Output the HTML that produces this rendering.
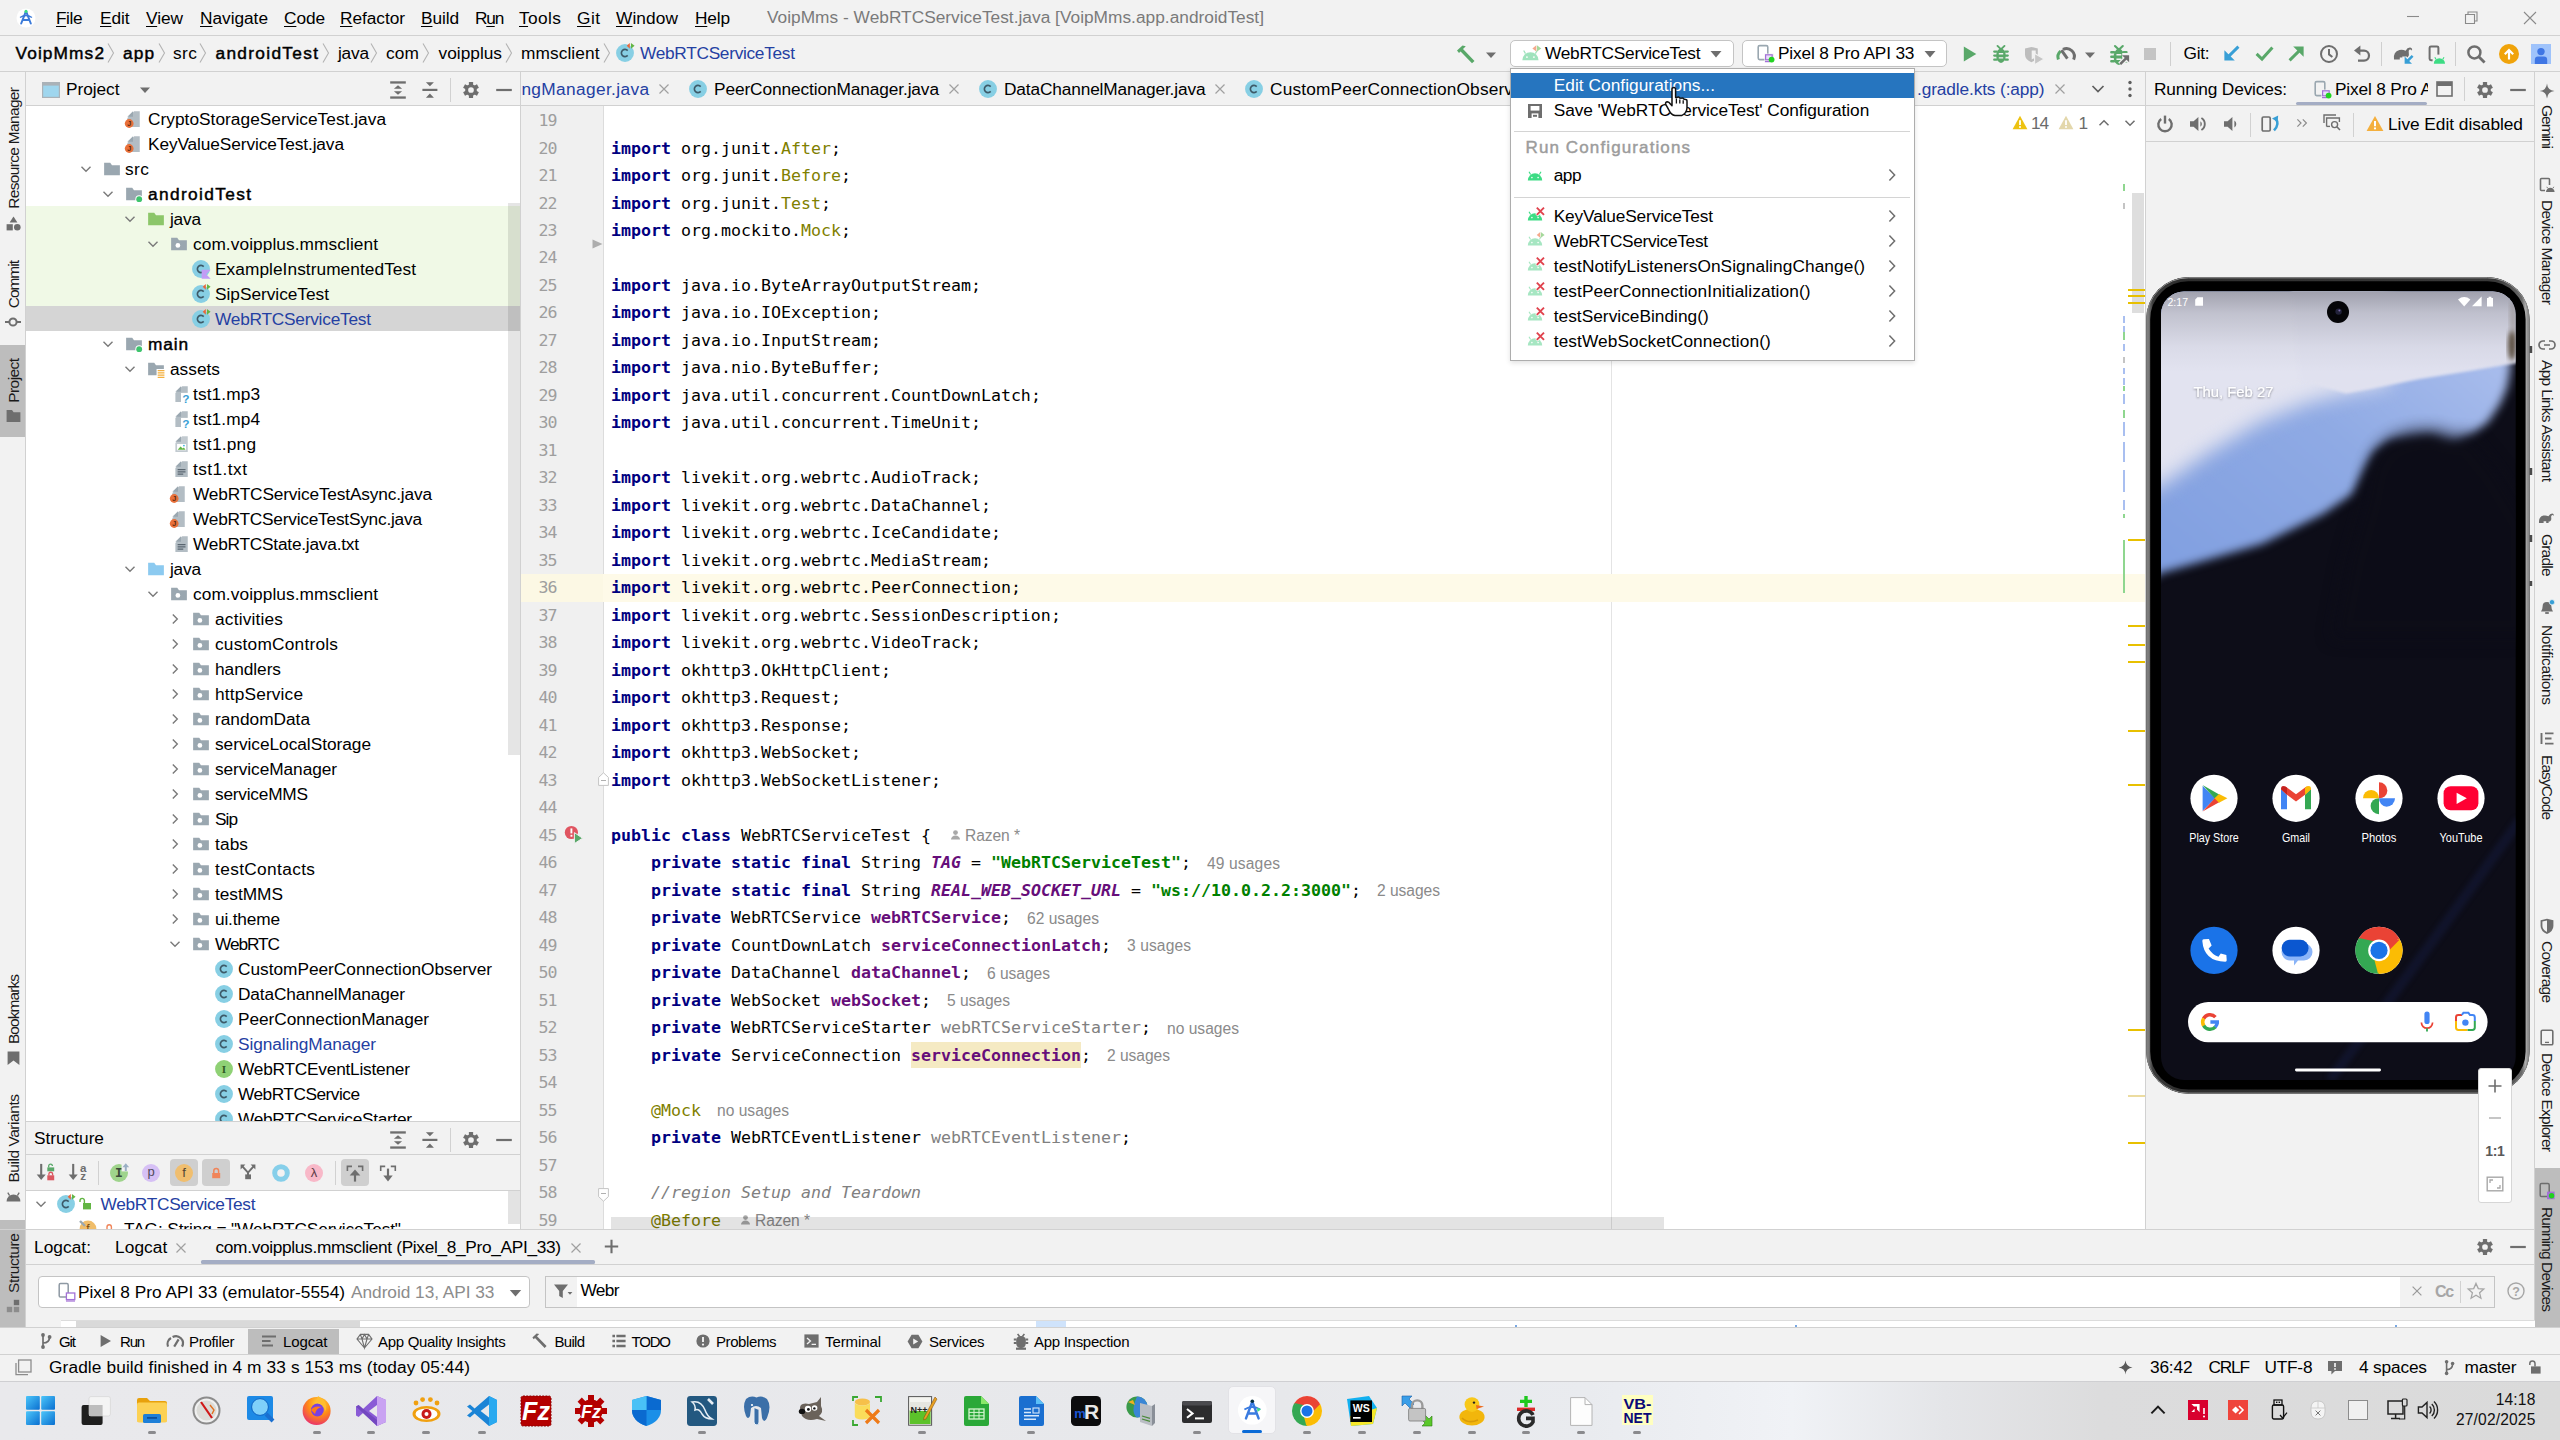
<!DOCTYPE html>
<html lang="en"><head><meta charset="utf-8"><title>VoipMms - WebRTCServiceTest.java</title>
<style>
html,body{margin:0;padding:0;}
body{width:2560px;height:1440px;overflow:hidden;background:#f2f2f2;position:relative;font-family:"Liberation Sans",sans-serif;}
div,span,svg{position:absolute;box-sizing:border-box;}
svg{overflow:visible;}
span{white-space:pre;}
.s{font-family:"Liberation Sans",sans-serif;}
.m{font-family:"DejaVu Sans Mono","Liberation Mono",monospace;}
u{text-decoration-thickness:1px;text-underline-offset:2px;}
</style></head><body>
<div style="left:0px;top:0px;width:2560px;height:1381px;background:#f2f2f2;"></div>
<div style="left:0px;top:35px;width:2560px;height:1px;background:#d1d1d1;"></div>
<div style="left:0px;top:71px;width:2560px;height:1px;background:#d1d1d1;"></div>
<svg style="left:16px;top:8px;" width="20" height="20" viewBox="0 0 20 20"><circle cx="10" cy="10" r="9.5" fill="#fff"/><path d="M10 3.2 L14.8 15.5 M10 3.2 L5.2 15.5 M6.6 12 H13.4" stroke="#3c7bd9" stroke-width="2" fill="none" stroke-linecap="round"/><path d="M4 9.5 Q10 5.5 16 9.5" stroke="#3c7bd9" stroke-width="1.3" fill="none"/><circle cx="10" cy="3.4" r="1.6" fill="#3ddc84"/></svg>
<span class="s" style="left:56.00px;top:10.35px;font-size:17.3px;line-height:17.3px;color:#000;letter-spacing:-0.453px;"><u>F</u>ile</span>
<span class="s" style="left:100.00px;top:10.35px;font-size:17.3px;line-height:17.3px;color:#000;letter-spacing:-0.094px;"><u>E</u>dit</span>
<span class="s" style="left:146.00px;top:10.35px;font-size:17.3px;line-height:17.3px;color:#000;letter-spacing:-0.052px;"><u>V</u>iew</span>
<span class="s" style="left:200.00px;top:10.35px;font-size:17.3px;line-height:17.3px;color:#000;letter-spacing:-0.031px;"><u>N</u>avigate</span>
<span class="s" style="left:284.00px;top:10.35px;font-size:17.3px;line-height:17.3px;color:#000;letter-spacing:-0.109px;"><u>C</u>ode</span>
<span class="s" style="left:340.00px;top:10.35px;font-size:17.3px;line-height:17.3px;color:#000;letter-spacing:-0.045px;"><u>R</u>efactor</span>
<span class="s" style="left:421.00px;top:10.35px;font-size:17.3px;line-height:17.3px;color:#000;letter-spacing:-0.109px;"><u>B</u>uild</span>
<span class="s" style="left:475.00px;top:10.35px;font-size:17.3px;line-height:17.3px;color:#000;letter-spacing:-1.200px;">R<u>u</u>n</span>
<span class="s" style="left:519.00px;top:10.35px;font-size:17.3px;line-height:17.3px;color:#000;letter-spacing:0.414px;"><u>T</u>ools</span>
<span class="s" style="left:577.00px;top:10.35px;font-size:17.3px;line-height:17.3px;color:#000;letter-spacing:0.453px;"><u>G</u>it</span>
<span class="s" style="left:616.00px;top:10.35px;font-size:17.3px;line-height:17.3px;color:#000;letter-spacing:0.106px;"><u>W</u>indow</span>
<span class="s" style="left:695.00px;top:10.35px;font-size:17.3px;line-height:17.3px;color:#000;letter-spacing:-0.182px;"><u>H</u>elp</span>
<span class="s" style="left:767.00px;top:8.95px;font-size:17.3px;line-height:17.3px;color:#7a7a7a;letter-spacing:0.019px;">VoipMms - WebRTCServiceTest.java [VoipMms.app.androidTest]</span>
<svg style="left:2400px;top:4px;" width="150" height="28" viewBox="0 0 150 28"><path d="M7 12.5h12" stroke="#8a8a8a" stroke-width="1.1"/><path d="M65.5 10.5h9v9h-9z M68 10.5v-2.5h9v9h-2.5" stroke="#8a8a8a" stroke-width="1.1" fill="none"/><path d="M124 8 L136 20 M136 8 L124 20" stroke="#8a8a8a" stroke-width="1.1"/></svg>
<span class="s" style="left:15.50px;top:45.35px;font-size:17.3px;line-height:17.3px;color:#000;letter-spacing:1.116px;-webkit-text-stroke:.45px #000;">VoipMms2</span>
<span class="s" style="left:123.00px;top:45.35px;font-size:17.3px;line-height:17.3px;color:#000;letter-spacing:1.078px;-webkit-text-stroke:.45px #000;">app</span>
<span class="s" style="left:173.00px;top:45.35px;font-size:17.3px;line-height:17.3px;color:#000;letter-spacing:0.477px;">src</span>
<span class="s" style="left:215.50px;top:45.35px;font-size:17.3px;line-height:17.3px;color:#000;letter-spacing:1.316px;-webkit-text-stroke:.45px #000;">androidTest</span>
<span class="s" style="left:338.00px;top:45.35px;font-size:17.3px;line-height:17.3px;color:#000;letter-spacing:-0.234px;">java</span>
<span class="s" style="left:386.00px;top:45.35px;font-size:17.3px;line-height:17.3px;color:#000;letter-spacing:0.172px;">com</span>
<span class="s" style="left:438.50px;top:45.35px;font-size:17.3px;line-height:17.3px;color:#000;letter-spacing:0.013px;">voipplus</span>
<span class="s" style="left:521.00px;top:45.35px;font-size:17.3px;line-height:17.3px;color:#000;letter-spacing:0.090px;">mmsclient</span>
<svg style="left:106.5px;top:43px;" width="8" height="20" viewBox="0 0 8 20"><path d="M1 0.5 L6.5 10 L1 19.5" fill="none" stroke="#b3b3b3" stroke-width="1.1"/></svg>
<svg style="left:158px;top:43px;" width="8" height="20" viewBox="0 0 8 20"><path d="M1 0.5 L6.5 10 L1 19.5" fill="none" stroke="#b3b3b3" stroke-width="1.1"/></svg>
<svg style="left:199px;top:43px;" width="8" height="20" viewBox="0 0 8 20"><path d="M1 0.5 L6.5 10 L1 19.5" fill="none" stroke="#b3b3b3" stroke-width="1.1"/></svg>
<svg style="left:321.5px;top:43px;" width="8" height="20" viewBox="0 0 8 20"><path d="M1 0.5 L6.5 10 L1 19.5" fill="none" stroke="#b3b3b3" stroke-width="1.1"/></svg>
<svg style="left:370px;top:43px;" width="8" height="20" viewBox="0 0 8 20"><path d="M1 0.5 L6.5 10 L1 19.5" fill="none" stroke="#b3b3b3" stroke-width="1.1"/></svg>
<svg style="left:421.5px;top:43px;" width="8" height="20" viewBox="0 0 8 20"><path d="M1 0.5 L6.5 10 L1 19.5" fill="none" stroke="#b3b3b3" stroke-width="1.1"/></svg>
<svg style="left:505px;top:43px;" width="8" height="20" viewBox="0 0 8 20"><path d="M1 0.5 L6.5 10 L1 19.5" fill="none" stroke="#b3b3b3" stroke-width="1.1"/></svg>
<svg style="left:603px;top:43px;" width="8" height="20" viewBox="0 0 8 20"><path d="M1 0.5 L6.5 10 L1 19.5" fill="none" stroke="#b3b3b3" stroke-width="1.1"/></svg>
<svg style="left:616px;top:44px;" width="18" height="18" viewBox="0 0 16 16"><circle cx="8" cy="8" r="7.95" fill="#87cfe4"/><path d="M10.4 5.9 A3.2 3.2 0 1 0 10.4 10.1" fill="none" stroke="#3d5a68" stroke-width="1.45"/><path d="M12.3 -.9 V4.2 L9.5 1.65 Z" fill="#e8663a"/><path d="M13.3 -.9 L16.5 1.65 L13.3 4.2 Z" fill="#62b543"/></svg>
<span class="s" style="left:640.00px;top:45.35px;font-size:17.3px;line-height:17.3px;color:#2440a2;letter-spacing:-0.297px;">WebRTCServiceTest</span>
<div style="left:25px;top:72px;width:1px;height:1255px;background:#d1d1d1;"></div>
<div style="left:0px;top:344.5px;width:25px;height:92px;background:#bdbdbd;"></div>
<div style="left:0px;top:1219.5px;width:25px;height:107.5px;background:#bdbdbd;"></div>
<svg style="left:1.5px;top:85.30000000000001px;" width="24" height="125.7" viewBox="0 0 24 125.7"><text transform="translate(17.4,62.85) rotate(-90)" text-anchor="middle" textLength="121.7" lengthAdjust="spacing" font-family="Liberation Sans, sans-serif" font-size="15.5" font-weight="400" fill="#1a1a1a">Resource Manager</text></svg>
<svg style="left:1.5px;top:257.70000000000005px;" width="24" height="52.30000000000001" viewBox="0 0 24 52.30000000000001"><text transform="translate(17.4,26.150000000000006) rotate(-90)" text-anchor="middle" textLength="48.30000000000001" lengthAdjust="spacing" font-family="Liberation Sans, sans-serif" font-size="15.5" font-weight="400" fill="#1a1a1a">Commit</text></svg>
<svg style="left:1.5px;top:356.29999999999995px;" width="24" height="48.69999999999999" viewBox="0 0 24 48.69999999999999"><text transform="translate(17.4,24.349999999999994) rotate(-90)" text-anchor="middle" textLength="44.69999999999999" lengthAdjust="spacing" font-family="Liberation Sans, sans-serif" font-size="15.5" font-weight="400" fill="#1a1a1a">Project</text></svg>
<svg style="left:1.5px;top:972.3px;" width="24" height="74.10000000000014" viewBox="0 0 24 74.10000000000014"><text transform="translate(17.4,37.05000000000007) rotate(-90)" text-anchor="middle" textLength="70.10000000000014" lengthAdjust="spacing" font-family="Liberation Sans, sans-serif" font-size="15.5" font-weight="400" fill="#1a1a1a">Bookmarks</text></svg>
<svg style="left:1.5px;top:1092.0px;" width="24" height="92.59999999999991" viewBox="0 0 24 92.59999999999991"><text transform="translate(17.4,46.299999999999955) rotate(-90)" text-anchor="middle" textLength="88.59999999999991" lengthAdjust="spacing" font-family="Liberation Sans, sans-serif" font-size="15.5" font-weight="400" fill="#1a1a1a">Build Variants</text></svg>
<svg style="left:1.5px;top:1230.8px;" width="24" height="64.0" viewBox="0 0 24 64.0"><text transform="translate(17.4,32.0) rotate(-90)" text-anchor="middle" textLength="60.0" lengthAdjust="spacing" font-family="Liberation Sans, sans-serif" font-size="15.5" font-weight="400" fill="#1a1a1a">Structure</text></svg>
<svg style="left:5.5px;top:215.5px;" width="15" height="15" viewBox="0 0 15 15"><path d="M7.5 .6 L11.4 6.6 H3.6 Z" fill="#6e6e6e"/><rect x=".6" y="8.2" width="6.2" height="6.2" fill="#6e6e6e"/><circle cx="11.3" cy="11.3" r="3.3" fill="#6e6e6e"/></svg>
<svg style="left:5px;top:314px;" width="16" height="16" viewBox="0 0 16 16"><circle cx="8" cy="8" r="3.6" fill="none" stroke="#6e6e6e" stroke-width="2"/><path d="M0 8h4.4M11.6 8h4.4" stroke="#6e6e6e" stroke-width="2"/></svg>
<svg style="left:5.5px;top:409px;" width="15" height="14" viewBox="0 0 15 14"><path d="M.6 1 H6 L7.6 3.2 H14.4 V13 H.6 Z" fill="#6e6e6e"/></svg>
<svg style="left:6.5px;top:1051px;" width="13" height="14.5" viewBox="0 0 13 14.5"><path d="M.6 .4 H12.4 V14 L6.5 9.6 L.6 14 Z" fill="#6e6e6e"/></svg>
<svg style="left:5.5px;top:1189px;" width="15" height="13" viewBox="0 0 15 13"><path d="M.6 12.4 A6.9 6.9 0 0 1 14.4 12.4 Z" fill="#6e6e6e"/><path d="M3.6 6.6 L1.8 3.6 M11.4 6.6 L13.2 3.6" stroke="#6e6e6e" stroke-width="1.3"/></svg>
<svg style="left:6px;top:1299px;" width="14" height="14" viewBox="0 0 14 14"><rect x="7.8" y=".8" width="5.4" height="5.4" fill="#6e6e6e"/><rect x=".8" y="7.8" width="5.4" height="5.4" fill="#8c8c8c"/><rect x="7.8" y="7.8" width="5.4" height="5.4" fill="#8c8c8c"/></svg>
<div style="left:26px;top:106px;width:494px;height:1016px;background:#fff;"></div>
<div style="left:26px;top:105px;width:494px;height:1px;background:#d1d1d1;"></div>
<div style="left:520px;top:72px;width:1px;height:1158px;background:#d1d1d1;"></div>
<svg style="left:42px;top:82px;" width="18" height="16" viewBox="0 0 18 16"><rect x=".6" y=".6" width="16.8" height="14.8" fill="#9fd6ee" stroke="#aab2b8" stroke-width="1.2"/><rect x=".6" y=".6" width="16.8" height="3" fill="#aab2b8"/></svg>
<span class="s" style="left:66.00px;top:81.35px;font-size:17.3px;line-height:17.3px;color:#000;letter-spacing:-0.049px;">Project</span>
<svg style="left:139px;top:86px;" width="12" height="8" viewBox="0 0 12 8"><path d="M1 1.5 H11 L6 7 Z" fill="#6e6e6e"/></svg>
<svg style="left:390px;top:82px;overflow:visible;" width="16" height="16" viewBox="0 0 16 16"><rect x=".2" y="-.7" width="15.6" height="2.3" fill="#6e6e6e"/><rect x=".2" y="14.4" width="15.6" height="2.3" fill="#6e6e6e"/><path d="M8 3.2 L12.1 6.8 H3.9 Z M8 12.8 L12.1 9.2 H3.9 Z" fill="#6e6e6e"/></svg>
<svg style="left:422px;top:82px;overflow:visible;" width="16" height="16" viewBox="0 0 16 16"><rect x=".4" y="6.8" width="15" height="2.2" fill="#6e6e6e"/><path d="M3.9 .2 H11.9 L7.9 4.3 Z M3.9 15.8 H11.9 L7.9 11.4 Z" fill="#6e6e6e"/></svg>
<div style="left:450px;top:78px;width:1px;height:24px;background:#d1d1d1;"></div>
<svg style="left:463px;top:82px;" width="16" height="16" viewBox="0 0 16 16"><rect x="5.9" y="0" width="4.2" height="3.6" rx=".5" fill="#6e6e6e" transform="rotate(0 8 8)"/><rect x="5.9" y="0" width="4.2" height="3.6" rx=".5" fill="#6e6e6e" transform="rotate(60 8 8)"/><rect x="5.9" y="0" width="4.2" height="3.6" rx=".5" fill="#6e6e6e" transform="rotate(120 8 8)"/><rect x="5.9" y="0" width="4.2" height="3.6" rx=".5" fill="#6e6e6e" transform="rotate(180 8 8)"/><rect x="5.9" y="0" width="4.2" height="3.6" rx=".5" fill="#6e6e6e" transform="rotate(240 8 8)"/><rect x="5.9" y="0" width="4.2" height="3.6" rx=".5" fill="#6e6e6e" transform="rotate(300 8 8)"/><circle cx="8" cy="8" r="4.35" fill="none" stroke="#6e6e6e" stroke-width="3"/></svg>
<svg style="left:496px;top:82px;" width="16" height="16" viewBox="0 0 16 16"><rect x=".2" y="6.9" width="15.6" height="2.2" fill="#6e6e6e"/></svg>
<div style="left:26px;top:206px;width:494px;height:100px;background:#f0f9e6;"></div>
<div style="left:26px;top:306px;width:494px;height:25px;background:#d5d5d5;"></div>
<div style="left:26px;top:106px;width:494px;height:1016px;overflow:hidden">
<svg style="left:98px;top:3.5px;" width="18" height="18" viewBox="0 0 16 16"><path d="M9 1 H14 V15 H3 V7 Z" fill="#9aa7b0" opacity=".75"/><path d="M8 1 V6 H3 Z" fill="#9aa7b0"/><circle cx="4.6" cy="12" r="3.9" fill="#e8703a"/><text x="4.6" y="14.3" text-anchor="middle" font-family="Liberation Sans, sans-serif" font-size="6.5" font-weight="700" fill="#5a2a10">J</text></svg>
<span class="s" style="left:122.00px;top:4.85px;font-size:17.3px;line-height:17.3px;color:#000;letter-spacing:0.027px;">CryptoStorageServiceTest.java</span>
<svg style="left:98px;top:28.5px;" width="18" height="18" viewBox="0 0 16 16"><path d="M9 1 H14 V15 H3 V7 Z" fill="#9aa7b0" opacity=".75"/><path d="M8 1 V6 H3 Z" fill="#9aa7b0"/><circle cx="4.6" cy="12" r="3.9" fill="#e8703a"/><text x="4.6" y="14.3" text-anchor="middle" font-family="Liberation Sans, sans-serif" font-size="6.5" font-weight="700" fill="#5a2a10">J</text></svg>
<span class="s" style="left:122.00px;top:29.85px;font-size:17.3px;line-height:17.3px;color:#000;letter-spacing:-0.109px;">KeyValueServiceTest.java</span>
<svg style="left:77px;top:53.5px;" width="18" height="18" viewBox="0 0 16 16"><path d="M1 2.5 H6.4 L8 4.6 H15 V13.5 H1 Z" fill="#9aa7b0"/></svg>
<span class="s" style="left:99.00px;top:54.85px;font-size:17.3px;line-height:17.3px;color:#000;letter-spacing:0.477px;">src</span>
<svg style="left:52px;top:54.5px;" width="16" height="16" viewBox="0 0 16 16"><path d="M3.5 5.8 L8 10.3 L12.5 5.8" fill="none" stroke="#7a7a7a" stroke-width="1.4"/></svg>
<svg style="left:99px;top:78.5px;" width="18" height="18" viewBox="0 0 16 16"><path d="M1 2.5 H6.4 L8 4.6 H15 V13.5 H1 Z" fill="#9aa7b0"/><circle cx="12.6" cy="12.6" r="3.4" fill="#fff"/><circle cx="12.6" cy="12.6" r="2.6" fill="#3ec46d"/></svg>
<span class="s" style="left:122.00px;top:79.85px;font-size:17.3px;line-height:17.3px;color:#000;letter-spacing:1.366px;-webkit-text-stroke:.45px #000;">androidTest</span>
<svg style="left:74px;top:79.5px;" width="16" height="16" viewBox="0 0 16 16"><path d="M3.5 5.8 L8 10.3 L12.5 5.8" fill="none" stroke="#7a7a7a" stroke-width="1.4"/></svg>
<svg style="left:121px;top:103.5px;" width="18" height="18" viewBox="0 0 16 16"><path d="M1 2.5 H6.4 L8 4.6 H15 V13.5 H1 Z" fill="#8cc66a"/></svg>
<span class="s" style="left:144.00px;top:104.85px;font-size:17.3px;line-height:17.3px;color:#000;letter-spacing:-0.234px;">java</span>
<svg style="left:96px;top:104.5px;" width="16" height="16" viewBox="0 0 16 16"><path d="M3.5 5.8 L8 10.3 L12.5 5.8" fill="none" stroke="#7a7a7a" stroke-width="1.4"/></svg>
<svg style="left:144px;top:128.5px;" width="18" height="18" viewBox="0 0 16 16"><path d="M1 2.5 H6.4 L8 4.6 H15 V13.5 H1 Z" fill="#9aa7b0"/><circle cx="7" cy="9.3" r="2.1" fill="#fff"/></svg>
<span class="s" style="left:167.00px;top:129.85px;font-size:17.3px;line-height:17.3px;color:#000;letter-spacing:0.074px;">com.voipplus.mmsclient</span>
<svg style="left:119px;top:129.5px;" width="16" height="16" viewBox="0 0 16 16"><path d="M3.5 5.8 L8 10.3 L12.5 5.8" fill="none" stroke="#7a7a7a" stroke-width="1.4"/></svg>
<svg style="left:166px;top:153.5px;" width="18" height="18" viewBox="0 0 16 16"><circle cx="8" cy="8" r="7.95" fill="#87cfe4"/><path d="M10.4 5.9 A3.2 3.2 0 1 0 10.4 10.1" fill="none" stroke="#3d5a68" stroke-width="1.45"/><path d="M8.6 8.7 H16.6 L12.6 12.7 L16.6 16.7 H8.6 Z" fill="#c29cf5"/></svg>
<span class="s" style="left:189.00px;top:154.85px;font-size:17.3px;line-height:17.3px;color:#000;letter-spacing:0.055px;">ExampleInstrumentedTest</span>
<svg style="left:166px;top:178.5px;" width="18" height="18" viewBox="0 0 16 16"><circle cx="8" cy="8" r="7.95" fill="#87cfe4"/><path d="M10.4 5.9 A3.2 3.2 0 1 0 10.4 10.1" fill="none" stroke="#3d5a68" stroke-width="1.45"/><path d="M12.3 -.9 V4.2 L9.5 1.65 Z" fill="#e8663a"/><path d="M13.3 -.9 L16.5 1.65 L13.3 4.2 Z" fill="#62b543"/></svg>
<span class="s" style="left:189.00px;top:179.85px;font-size:17.3px;line-height:17.3px;color:#000;letter-spacing:-0.023px;">SipServiceTest</span>
<svg style="left:166px;top:203.5px;" width="18" height="18" viewBox="0 0 16 16"><circle cx="8" cy="8" r="7.95" fill="#87cfe4"/><path d="M10.4 5.9 A3.2 3.2 0 1 0 10.4 10.1" fill="none" stroke="#3d5a68" stroke-width="1.45"/><path d="M12.3 -.9 V4.2 L9.5 1.65 Z" fill="#e8663a"/><path d="M13.3 -.9 L16.5 1.65 L13.3 4.2 Z" fill="#62b543"/></svg>
<span class="s" style="left:189.00px;top:204.85px;font-size:17.3px;line-height:17.3px;color:#2440a2;letter-spacing:-0.234px;">WebRTCServiceTest</span>
<svg style="left:99px;top:228.5px;" width="18" height="18" viewBox="0 0 16 16"><path d="M1 2.5 H6.4 L8 4.6 H15 V13.5 H1 Z" fill="#9aa7b0"/><circle cx="12.6" cy="12.6" r="3.4" fill="#fff"/><circle cx="12.6" cy="12.6" r="2.6" fill="#3ec46d"/></svg>
<span class="s" style="left:122.00px;top:229.85px;font-size:17.3px;line-height:17.3px;color:#000;letter-spacing:0.844px;-webkit-text-stroke:.45px #000;">main</span>
<svg style="left:74px;top:229.5px;" width="16" height="16" viewBox="0 0 16 16"><path d="M3.5 5.8 L8 10.3 L12.5 5.8" fill="none" stroke="#7a7a7a" stroke-width="1.4"/></svg>
<svg style="left:121px;top:253.5px;" width="18" height="18" viewBox="0 0 16 16"><path d="M1 2.5 H6.4 L8 4.6 H15 V13.5 H1 Z" fill="#9aa7b0"/><rect x="8.5" y="8" width="8" height="8" fill="#fff"/><path d="M9.5 9.5h6M9.5 11.5h6M9.5 13.5h6M9.5 15.5h6" stroke="#f4af3d" stroke-width="1.1"/></svg>
<span class="s" style="left:144.00px;top:254.85px;font-size:17.3px;line-height:17.3px;color:#000;letter-spacing:0.009px;">assets</span>
<svg style="left:96px;top:254.5px;" width="16" height="16" viewBox="0 0 16 16"><path d="M3.5 5.8 L8 10.3 L12.5 5.8" fill="none" stroke="#7a7a7a" stroke-width="1.4"/></svg>
<svg style="left:146px;top:278.5px;" width="18" height="18" viewBox="0 0 16 16"><path d="M9 1 H14 V15 H3 V7 Z" fill="#9aa7b0" opacity=".75"/><path d="M8 1 V6 H3 Z" fill="#9aa7b0"/><rect x="8" y="7" width="8" height="9" fill="#fff"/><text x="12.4" y="15.6" text-anchor="middle" font-family="Liberation Sans, sans-serif" font-size="10.5" font-weight="700" fill="#3b9fd6">?</text></svg>
<span class="s" style="left:167.00px;top:279.85px;font-size:17.3px;line-height:17.3px;color:#000;letter-spacing:0.103px;">tst1.mp3</span>
<svg style="left:146px;top:303.5px;" width="18" height="18" viewBox="0 0 16 16"><path d="M9 1 H14 V15 H3 V7 Z" fill="#9aa7b0" opacity=".75"/><path d="M8 1 V6 H3 Z" fill="#9aa7b0"/><rect x="8" y="7" width="8" height="9" fill="#fff"/><text x="12.4" y="15.6" text-anchor="middle" font-family="Liberation Sans, sans-serif" font-size="10.5" font-weight="700" fill="#3b9fd6">?</text></svg>
<span class="s" style="left:167.00px;top:304.85px;font-size:17.3px;line-height:17.3px;color:#000;letter-spacing:0.103px;">tst1.mp4</span>
<svg style="left:146px;top:328.5px;" width="18" height="18" viewBox="0 0 16 16"><path d="M9 1 H14 V15 H3 V7 Z" fill="#9aa7b0" opacity=".6"/><path d="M8 1 V6 H3 Z" fill="#9aa7b0"/><rect x="4.5" y="8" width="8" height="5.6" fill="#fff"/><path d="M5 13 L7.6 10.2 L9.5 12 L10.6 11 L12 13 Z" fill="#62b543"/><circle cx="10.6" cy="9.4" r=".8" fill="#40b6e0"/></svg>
<span class="s" style="left:167.00px;top:329.85px;font-size:17.3px;line-height:17.3px;color:#000;letter-spacing:0.214px;">tst1.png</span>
<svg style="left:146px;top:353.5px;" width="18" height="18" viewBox="0 0 16 16"><path d="M9 1 H14 V15 H3 V7 Z" fill="#9aa7b0" opacity=".75"/><path d="M8 1 V6 H3 Z" fill="#9aa7b0"/><path d="M5 8.5h7M5 10.5h7M5 12.5h5" stroke="#5a6670" stroke-width="1"/></svg>
<span class="s" style="left:167.00px;top:354.85px;font-size:17.3px;line-height:17.3px;color:#000;letter-spacing:0.442px;">tst1.txt</span>
<svg style="left:143px;top:378.5px;" width="18" height="18" viewBox="0 0 16 16"><path d="M9 1 H14 V15 H3 V7 Z" fill="#9aa7b0" opacity=".75"/><path d="M8 1 V6 H3 Z" fill="#9aa7b0"/><circle cx="4.6" cy="12" r="3.9" fill="#e8703a"/><text x="4.6" y="14.3" text-anchor="middle" font-family="Liberation Sans, sans-serif" font-size="6.5" font-weight="700" fill="#5a2a10">J</text></svg>
<span class="s" style="left:167.00px;top:379.85px;font-size:17.3px;line-height:17.3px;color:#000;letter-spacing:-0.166px;">WebRTCServiceTestAsync.java</span>
<svg style="left:143px;top:403.5px;" width="18" height="18" viewBox="0 0 16 16"><path d="M9 1 H14 V15 H3 V7 Z" fill="#9aa7b0" opacity=".75"/><path d="M8 1 V6 H3 Z" fill="#9aa7b0"/><circle cx="4.6" cy="12" r="3.9" fill="#e8703a"/><text x="4.6" y="14.3" text-anchor="middle" font-family="Liberation Sans, sans-serif" font-size="6.5" font-weight="700" fill="#5a2a10">J</text></svg>
<span class="s" style="left:167.00px;top:404.85px;font-size:17.3px;line-height:17.3px;color:#000;letter-spacing:-0.227px;">WebRTCServiceTestSync.java</span>
<svg style="left:146px;top:428.5px;" width="18" height="18" viewBox="0 0 16 16"><path d="M9 1 H14 V15 H3 V7 Z" fill="#9aa7b0" opacity=".75"/><path d="M8 1 V6 H3 Z" fill="#9aa7b0"/><path d="M5 8.5h7M5 10.5h7M5 12.5h5" stroke="#5a6670" stroke-width="1"/></svg>
<span class="s" style="left:167.00px;top:429.85px;font-size:17.3px;line-height:17.3px;color:#000;letter-spacing:-0.228px;">WebRTCState.java.txt</span>
<svg style="left:121px;top:453.5px;" width="18" height="18" viewBox="0 0 16 16"><path d="M1 2.5 H6.4 L8 4.6 H15 V13.5 H1 Z" fill="#8ccaf0"/></svg>
<span class="s" style="left:144.00px;top:454.85px;font-size:17.3px;line-height:17.3px;color:#000;letter-spacing:-0.234px;">java</span>
<svg style="left:96px;top:454.5px;" width="16" height="16" viewBox="0 0 16 16"><path d="M3.5 5.8 L8 10.3 L12.5 5.8" fill="none" stroke="#7a7a7a" stroke-width="1.4"/></svg>
<svg style="left:144px;top:478.5px;" width="18" height="18" viewBox="0 0 16 16"><path d="M1 2.5 H6.4 L8 4.6 H15 V13.5 H1 Z" fill="#9aa7b0"/><circle cx="7" cy="9.3" r="2.1" fill="#fff"/></svg>
<span class="s" style="left:167.00px;top:479.85px;font-size:17.3px;line-height:17.3px;color:#000;letter-spacing:0.074px;">com.voipplus.mmsclient</span>
<svg style="left:119px;top:479.5px;" width="16" height="16" viewBox="0 0 16 16"><path d="M3.5 5.8 L8 10.3 L12.5 5.8" fill="none" stroke="#7a7a7a" stroke-width="1.4"/></svg>
<svg style="left:166px;top:503.5px;" width="18" height="18" viewBox="0 0 16 16"><path d="M1 2.5 H6.4 L8 4.6 H15 V13.5 H1 Z" fill="#9aa7b0"/><circle cx="7" cy="9.3" r="2.1" fill="#fff"/></svg>
<span class="s" style="left:189.00px;top:504.85px;font-size:17.3px;line-height:17.3px;color:#000;letter-spacing:0.193px;">activities</span>
<svg style="left:141px;top:504.5px;" width="16" height="16" viewBox="0 0 16 16"><path d="M5.8 3.5 L10.3 8 L5.8 12.5" fill="none" stroke="#7a7a7a" stroke-width="1.4"/></svg>
<svg style="left:166px;top:528.5px;" width="18" height="18" viewBox="0 0 16 16"><path d="M1 2.5 H6.4 L8 4.6 H15 V13.5 H1 Z" fill="#9aa7b0"/><circle cx="7" cy="9.3" r="2.1" fill="#fff"/></svg>
<span class="s" style="left:189.00px;top:529.85px;font-size:17.3px;line-height:17.3px;color:#000;letter-spacing:0.226px;">customControls</span>
<svg style="left:141px;top:529.5px;" width="16" height="16" viewBox="0 0 16 16"><path d="M5.8 3.5 L10.3 8 L5.8 12.5" fill="none" stroke="#7a7a7a" stroke-width="1.4"/></svg>
<svg style="left:166px;top:553.5px;" width="18" height="18" viewBox="0 0 16 16"><path d="M1 2.5 H6.4 L8 4.6 H15 V13.5 H1 Z" fill="#9aa7b0"/><circle cx="7" cy="9.3" r="2.1" fill="#fff"/></svg>
<span class="s" style="left:189.00px;top:554.85px;font-size:17.3px;line-height:17.3px;color:#000;letter-spacing:-0.042px;">handlers</span>
<svg style="left:141px;top:554.5px;" width="16" height="16" viewBox="0 0 16 16"><path d="M5.8 3.5 L10.3 8 L5.8 12.5" fill="none" stroke="#7a7a7a" stroke-width="1.4"/></svg>
<svg style="left:166px;top:578.5px;" width="18" height="18" viewBox="0 0 16 16"><path d="M1 2.5 H6.4 L8 4.6 H15 V13.5 H1 Z" fill="#9aa7b0"/><circle cx="7" cy="9.3" r="2.1" fill="#fff"/></svg>
<span class="s" style="left:189.00px;top:579.85px;font-size:17.3px;line-height:17.3px;color:#000;letter-spacing:0.155px;">httpService</span>
<svg style="left:141px;top:579.5px;" width="16" height="16" viewBox="0 0 16 16"><path d="M5.8 3.5 L10.3 8 L5.8 12.5" fill="none" stroke="#7a7a7a" stroke-width="1.4"/></svg>
<svg style="left:166px;top:603.5px;" width="18" height="18" viewBox="0 0 16 16"><path d="M1 2.5 H6.4 L8 4.6 H15 V13.5 H1 Z" fill="#9aa7b0"/><circle cx="7" cy="9.3" r="2.1" fill="#fff"/></svg>
<span class="s" style="left:189.00px;top:604.85px;font-size:17.3px;line-height:17.3px;color:#000;letter-spacing:-0.012px;">randomData</span>
<svg style="left:141px;top:604.5px;" width="16" height="16" viewBox="0 0 16 16"><path d="M5.8 3.5 L10.3 8 L5.8 12.5" fill="none" stroke="#7a7a7a" stroke-width="1.4"/></svg>
<svg style="left:166px;top:628.5px;" width="18" height="18" viewBox="0 0 16 16"><path d="M1 2.5 H6.4 L8 4.6 H15 V13.5 H1 Z" fill="#9aa7b0"/><circle cx="7" cy="9.3" r="2.1" fill="#fff"/></svg>
<span class="s" style="left:189.00px;top:629.85px;font-size:17.3px;line-height:17.3px;color:#000;letter-spacing:-0.032px;">serviceLocalStorage</span>
<svg style="left:141px;top:629.5px;" width="16" height="16" viewBox="0 0 16 16"><path d="M5.8 3.5 L10.3 8 L5.8 12.5" fill="none" stroke="#7a7a7a" stroke-width="1.4"/></svg>
<svg style="left:166px;top:653.5px;" width="18" height="18" viewBox="0 0 16 16"><path d="M1 2.5 H6.4 L8 4.6 H15 V13.5 H1 Z" fill="#9aa7b0"/><circle cx="7" cy="9.3" r="2.1" fill="#fff"/></svg>
<span class="s" style="left:189.00px;top:654.85px;font-size:17.3px;line-height:17.3px;color:#000;letter-spacing:-0.073px;">serviceManager</span>
<svg style="left:141px;top:654.5px;" width="16" height="16" viewBox="0 0 16 16"><path d="M5.8 3.5 L10.3 8 L5.8 12.5" fill="none" stroke="#7a7a7a" stroke-width="1.4"/></svg>
<svg style="left:166px;top:678.5px;" width="18" height="18" viewBox="0 0 16 16"><path d="M1 2.5 H6.4 L8 4.6 H15 V13.5 H1 Z" fill="#9aa7b0"/><circle cx="7" cy="9.3" r="2.1" fill="#fff"/></svg>
<span class="s" style="left:189.00px;top:679.85px;font-size:17.3px;line-height:17.3px;color:#000;letter-spacing:-0.229px;">serviceMMS</span>
<svg style="left:141px;top:679.5px;" width="16" height="16" viewBox="0 0 16 16"><path d="M5.8 3.5 L10.3 8 L5.8 12.5" fill="none" stroke="#7a7a7a" stroke-width="1.4"/></svg>
<svg style="left:166px;top:703.5px;" width="18" height="18" viewBox="0 0 16 16"><path d="M1 2.5 H6.4 L8 4.6 H15 V13.5 H1 Z" fill="#9aa7b0"/><circle cx="7" cy="9.3" r="2.1" fill="#fff"/></svg>
<span class="s" style="left:189.00px;top:704.85px;font-size:17.3px;line-height:17.3px;color:#000;letter-spacing:-0.992px;">Sip</span>
<svg style="left:141px;top:704.5px;" width="16" height="16" viewBox="0 0 16 16"><path d="M5.8 3.5 L10.3 8 L5.8 12.5" fill="none" stroke="#7a7a7a" stroke-width="1.4"/></svg>
<svg style="left:166px;top:728.5px;" width="18" height="18" viewBox="0 0 16 16"><path d="M1 2.5 H6.4 L8 4.6 H15 V13.5 H1 Z" fill="#9aa7b0"/><circle cx="7" cy="9.3" r="2.1" fill="#fff"/></svg>
<span class="s" style="left:189.00px;top:729.85px;font-size:17.3px;line-height:17.3px;color:#000;letter-spacing:0.109px;">tabs</span>
<svg style="left:141px;top:729.5px;" width="16" height="16" viewBox="0 0 16 16"><path d="M5.8 3.5 L10.3 8 L5.8 12.5" fill="none" stroke="#7a7a7a" stroke-width="1.4"/></svg>
<svg style="left:166px;top:753.5px;" width="18" height="18" viewBox="0 0 16 16"><path d="M1 2.5 H6.4 L8 4.6 H15 V13.5 H1 Z" fill="#9aa7b0"/><circle cx="7" cy="9.3" r="2.1" fill="#fff"/></svg>
<span class="s" style="left:189.00px;top:754.85px;font-size:17.3px;line-height:17.3px;color:#000;letter-spacing:0.358px;">testContacts</span>
<svg style="left:141px;top:754.5px;" width="16" height="16" viewBox="0 0 16 16"><path d="M5.8 3.5 L10.3 8 L5.8 12.5" fill="none" stroke="#7a7a7a" stroke-width="1.4"/></svg>
<svg style="left:166px;top:778.5px;" width="18" height="18" viewBox="0 0 16 16"><path d="M1 2.5 H6.4 L8 4.6 H15 V13.5 H1 Z" fill="#9aa7b0"/><circle cx="7" cy="9.3" r="2.1" fill="#fff"/></svg>
<span class="s" style="left:189.00px;top:779.85px;font-size:17.3px;line-height:17.3px;color:#000;letter-spacing:-0.029px;">testMMS</span>
<svg style="left:141px;top:779.5px;" width="16" height="16" viewBox="0 0 16 16"><path d="M5.8 3.5 L10.3 8 L5.8 12.5" fill="none" stroke="#7a7a7a" stroke-width="1.4"/></svg>
<svg style="left:166px;top:803.5px;" width="18" height="18" viewBox="0 0 16 16"><path d="M1 2.5 H6.4 L8 4.6 H15 V13.5 H1 Z" fill="#9aa7b0"/><circle cx="7" cy="9.3" r="2.1" fill="#fff"/></svg>
<span class="s" style="left:189.00px;top:804.85px;font-size:17.3px;line-height:17.3px;color:#000;letter-spacing:-0.185px;">ui.theme</span>
<svg style="left:141px;top:804.5px;" width="16" height="16" viewBox="0 0 16 16"><path d="M5.8 3.5 L10.3 8 L5.8 12.5" fill="none" stroke="#7a7a7a" stroke-width="1.4"/></svg>
<svg style="left:166px;top:828.5px;" width="18" height="18" viewBox="0 0 16 16"><path d="M1 2.5 H6.4 L8 4.6 H15 V13.5 H1 Z" fill="#9aa7b0"/><circle cx="7" cy="9.3" r="2.1" fill="#fff"/></svg>
<span class="s" style="left:189.00px;top:829.85px;font-size:17.3px;line-height:17.3px;color:#000;letter-spacing:-1.087px;">WebRTC</span>
<svg style="left:141px;top:829.5px;" width="16" height="16" viewBox="0 0 16 16"><path d="M3.5 5.8 L8 10.3 L12.5 5.8" fill="none" stroke="#7a7a7a" stroke-width="1.4"/></svg>
<svg style="left:189px;top:853.5px;" width="18" height="18" viewBox="0 0 16 16"><circle cx="8" cy="8" r="7.95" fill="#87cfe4"/><path d="M10.4 5.9 A3.2 3.2 0 1 0 10.4 10.1" fill="none" stroke="#3d5a68" stroke-width="1.45"/></svg>
<span class="s" style="left:212.00px;top:854.85px;font-size:17.3px;line-height:17.3px;color:#000;letter-spacing:-0.020px;">CustomPeerConnectionObserver</span>
<svg style="left:189px;top:878.5px;" width="18" height="18" viewBox="0 0 16 16"><circle cx="8" cy="8" r="7.95" fill="#87cfe4"/><path d="M10.4 5.9 A3.2 3.2 0 1 0 10.4 10.1" fill="none" stroke="#3d5a68" stroke-width="1.45"/></svg>
<span class="s" style="left:212.00px;top:879.85px;font-size:17.3px;line-height:17.3px;color:#000;letter-spacing:-0.123px;">DataChannelManager</span>
<svg style="left:189px;top:903.5px;" width="18" height="18" viewBox="0 0 16 16"><circle cx="8" cy="8" r="7.95" fill="#87cfe4"/><path d="M10.4 5.9 A3.2 3.2 0 1 0 10.4 10.1" fill="none" stroke="#3d5a68" stroke-width="1.45"/></svg>
<span class="s" style="left:212.00px;top:904.85px;font-size:17.3px;line-height:17.3px;color:#000;letter-spacing:-0.057px;">PeerConnectionManager</span>
<svg style="left:189px;top:928.5px;" width="18" height="18" viewBox="0 0 16 16"><circle cx="8" cy="8" r="7.95" fill="#87cfe4"/><path d="M10.4 5.9 A3.2 3.2 0 1 0 10.4 10.1" fill="none" stroke="#3d5a68" stroke-width="1.45"/></svg>
<span class="s" style="left:212.00px;top:929.85px;font-size:17.3px;line-height:17.3px;color:#2440a2;letter-spacing:-0.087px;">SignalingManager</span>
<svg style="left:189px;top:953.5px;" width="18" height="18" viewBox="0 0 16 16"><circle cx="8" cy="8" r="7.95" fill="#8fd175"/><text x="8" y="11.4" text-anchor="middle" font-family="Liberation Serif, serif" font-size="10" font-weight="700" fill="#2f5a22">I</text></svg>
<span class="s" style="left:212.00px;top:954.85px;font-size:17.3px;line-height:17.3px;color:#000;letter-spacing:-0.228px;">WebRTCEventListener</span>
<svg style="left:189px;top:978.5px;" width="18" height="18" viewBox="0 0 16 16"><circle cx="8" cy="8" r="7.95" fill="#87cfe4"/><path d="M10.4 5.9 A3.2 3.2 0 1 0 10.4 10.1" fill="none" stroke="#3d5a68" stroke-width="1.45"/></svg>
<span class="s" style="left:212.00px;top:979.85px;font-size:17.3px;line-height:17.3px;color:#000;letter-spacing:-0.505px;">WebRTCService</span>
<svg style="left:189px;top:1003.5px;" width="18" height="18" viewBox="0 0 16 16"><circle cx="8" cy="8" r="7.95" fill="#87cfe4"/><path d="M10.4 5.9 A3.2 3.2 0 1 0 10.4 10.1" fill="none" stroke="#3d5a68" stroke-width="1.45"/></svg>
<span class="s" style="left:212.00px;top:1004.85px;font-size:17.3px;line-height:17.3px;color:#000;letter-spacing:-0.312px;">WebRTCServiceStarter</span>
</div>
<div style="left:508px;top:203px;width:12px;height:552px;background:#000;opacity:.10;"></div>
<div style="left:521px;top:106px;width:1624px;height:1124px;background:#fff;"></div>
<div style="left:521px;top:106px;width:82px;height:1124px;background:#f0f0f0;"></div>
<div style="left:603px;top:106px;width:1px;height:1124px;background:#dcdcdc;"></div>
<div style="left:521px;top:105px;width:1624px;height:1px;background:#d1d1d1;"></div>
<div style="left:2145px;top:72px;width:1px;height:1158px;background:#d1d1d1;"></div>
<div style="left:1611px;top:106px;width:1px;height:1124px;background:#e4e4e4;"></div>
<div style="left:521px;top:574.1299999999999px;width:1624px;height:27.5px;background:#fefae8;"></div>
<div style="left:521px;top:574.1299999999999px;width:82px;height:27.5px;background:#fcf8e4;"></div>
<span class="m" style="left:538.52px;top:113.03px;font-size:16.6px;line-height:16.6px;color:#9e9e9e;letter-spacing:-1.000px;">19</span>
<span class="m" style="left:538.52px;top:140.52px;font-size:16.6px;line-height:16.6px;color:#9e9e9e;letter-spacing:-1.000px;">20</span>
<span class="m" style="left:538.52px;top:168.01px;font-size:16.6px;line-height:16.6px;color:#9e9e9e;letter-spacing:-1.000px;">21</span>
<span class="m" style="left:538.52px;top:195.50px;font-size:16.6px;line-height:16.6px;color:#9e9e9e;letter-spacing:-1.000px;">22</span>
<span class="m" style="left:538.52px;top:222.99px;font-size:16.6px;line-height:16.6px;color:#9e9e9e;letter-spacing:-1.000px;">23</span>
<span class="m" style="left:538.52px;top:250.48px;font-size:16.6px;line-height:16.6px;color:#9e9e9e;letter-spacing:-1.000px;">24</span>
<span class="m" style="left:538.52px;top:277.97px;font-size:16.6px;line-height:16.6px;color:#9e9e9e;letter-spacing:-1.000px;">25</span>
<span class="m" style="left:538.52px;top:305.46px;font-size:16.6px;line-height:16.6px;color:#9e9e9e;letter-spacing:-1.000px;">26</span>
<span class="m" style="left:538.52px;top:332.95px;font-size:16.6px;line-height:16.6px;color:#9e9e9e;letter-spacing:-1.000px;">27</span>
<span class="m" style="left:538.52px;top:360.44px;font-size:16.6px;line-height:16.6px;color:#9e9e9e;letter-spacing:-1.000px;">28</span>
<span class="m" style="left:538.52px;top:387.93px;font-size:16.6px;line-height:16.6px;color:#9e9e9e;letter-spacing:-1.000px;">29</span>
<span class="m" style="left:538.52px;top:415.42px;font-size:16.6px;line-height:16.6px;color:#9e9e9e;letter-spacing:-1.000px;">30</span>
<span class="m" style="left:538.52px;top:442.91px;font-size:16.6px;line-height:16.6px;color:#9e9e9e;letter-spacing:-1.000px;">31</span>
<span class="m" style="left:538.52px;top:470.40px;font-size:16.6px;line-height:16.6px;color:#9e9e9e;letter-spacing:-1.000px;">32</span>
<span class="m" style="left:538.52px;top:497.89px;font-size:16.6px;line-height:16.6px;color:#9e9e9e;letter-spacing:-1.000px;">33</span>
<span class="m" style="left:538.52px;top:525.38px;font-size:16.6px;line-height:16.6px;color:#9e9e9e;letter-spacing:-1.000px;">34</span>
<span class="m" style="left:538.52px;top:552.87px;font-size:16.6px;line-height:16.6px;color:#9e9e9e;letter-spacing:-1.000px;">35</span>
<span class="m" style="left:538.52px;top:580.36px;font-size:16.6px;line-height:16.6px;color:#9e9e9e;letter-spacing:-1.000px;">36</span>
<span class="m" style="left:538.52px;top:607.85px;font-size:16.6px;line-height:16.6px;color:#9e9e9e;letter-spacing:-1.000px;">37</span>
<span class="m" style="left:538.52px;top:635.34px;font-size:16.6px;line-height:16.6px;color:#9e9e9e;letter-spacing:-1.000px;">38</span>
<span class="m" style="left:538.52px;top:662.83px;font-size:16.6px;line-height:16.6px;color:#9e9e9e;letter-spacing:-1.000px;">39</span>
<span class="m" style="left:538.52px;top:690.32px;font-size:16.6px;line-height:16.6px;color:#9e9e9e;letter-spacing:-1.000px;">40</span>
<span class="m" style="left:538.52px;top:717.81px;font-size:16.6px;line-height:16.6px;color:#9e9e9e;letter-spacing:-1.000px;">41</span>
<span class="m" style="left:538.52px;top:745.30px;font-size:16.6px;line-height:16.6px;color:#9e9e9e;letter-spacing:-1.000px;">42</span>
<span class="m" style="left:538.52px;top:772.79px;font-size:16.6px;line-height:16.6px;color:#9e9e9e;letter-spacing:-1.000px;">43</span>
<span class="m" style="left:538.52px;top:800.28px;font-size:16.6px;line-height:16.6px;color:#9e9e9e;letter-spacing:-1.000px;">44</span>
<span class="m" style="left:538.52px;top:827.77px;font-size:16.6px;line-height:16.6px;color:#9e9e9e;letter-spacing:-1.000px;">45</span>
<span class="m" style="left:538.52px;top:855.26px;font-size:16.6px;line-height:16.6px;color:#9e9e9e;letter-spacing:-1.000px;">46</span>
<span class="m" style="left:538.52px;top:882.75px;font-size:16.6px;line-height:16.6px;color:#9e9e9e;letter-spacing:-1.000px;">47</span>
<span class="m" style="left:538.52px;top:910.24px;font-size:16.6px;line-height:16.6px;color:#9e9e9e;letter-spacing:-1.000px;">48</span>
<span class="m" style="left:538.52px;top:937.73px;font-size:16.6px;line-height:16.6px;color:#9e9e9e;letter-spacing:-1.000px;">49</span>
<span class="m" style="left:538.52px;top:965.22px;font-size:16.6px;line-height:16.6px;color:#9e9e9e;letter-spacing:-1.000px;">50</span>
<span class="m" style="left:538.52px;top:992.71px;font-size:16.6px;line-height:16.6px;color:#9e9e9e;letter-spacing:-1.000px;">51</span>
<span class="m" style="left:538.52px;top:1020.20px;font-size:16.6px;line-height:16.6px;color:#9e9e9e;letter-spacing:-1.000px;">52</span>
<span class="m" style="left:538.52px;top:1047.69px;font-size:16.6px;line-height:16.6px;color:#9e9e9e;letter-spacing:-1.000px;">53</span>
<span class="m" style="left:538.52px;top:1075.18px;font-size:16.6px;line-height:16.6px;color:#9e9e9e;letter-spacing:-1.000px;">54</span>
<span class="m" style="left:538.52px;top:1102.67px;font-size:16.6px;line-height:16.6px;color:#9e9e9e;letter-spacing:-1.000px;">55</span>
<span class="m" style="left:538.52px;top:1130.16px;font-size:16.6px;line-height:16.6px;color:#9e9e9e;letter-spacing:-1.000px;">56</span>
<span class="m" style="left:538.52px;top:1157.65px;font-size:16.6px;line-height:16.6px;color:#9e9e9e;letter-spacing:-1.000px;">57</span>
<span class="m" style="left:538.52px;top:1185.14px;font-size:16.6px;line-height:16.6px;color:#9e9e9e;letter-spacing:-1.000px;">58</span>
<span class="m" style="left:538.52px;top:1212.63px;font-size:16.6px;line-height:16.6px;color:#9e9e9e;letter-spacing:-1.000px;">59</span>
<span class="m" style="left:611.00px;top:140.52px;font-size:16.6px;line-height:16.6px;color:#000080;letter-spacing:0.006px;font-weight:700;">import</span>
<span class="m" style="left:681.00px;top:140.52px;font-size:16.6px;line-height:16.6px;color:#000;letter-spacing:0.006px;">org.junit.</span>
<span class="m" style="left:781.00px;top:140.52px;font-size:16.6px;line-height:16.6px;color:#808000;letter-spacing:0.006px;">After</span>
<span class="m" style="left:831.00px;top:140.52px;font-size:16.6px;line-height:16.6px;color:#000;letter-spacing:0.006px;">;</span>
<span class="m" style="left:611.00px;top:168.01px;font-size:16.6px;line-height:16.6px;color:#000080;letter-spacing:0.006px;font-weight:700;">import</span>
<span class="m" style="left:681.00px;top:168.01px;font-size:16.6px;line-height:16.6px;color:#000;letter-spacing:0.006px;">org.junit.</span>
<span class="m" style="left:781.00px;top:168.01px;font-size:16.6px;line-height:16.6px;color:#808000;letter-spacing:0.006px;">Before</span>
<span class="m" style="left:841.00px;top:168.01px;font-size:16.6px;line-height:16.6px;color:#000;letter-spacing:0.006px;">;</span>
<span class="m" style="left:611.00px;top:195.50px;font-size:16.6px;line-height:16.6px;color:#000080;letter-spacing:0.006px;font-weight:700;">import</span>
<span class="m" style="left:681.00px;top:195.50px;font-size:16.6px;line-height:16.6px;color:#000;letter-spacing:0.006px;">org.junit.</span>
<span class="m" style="left:781.00px;top:195.50px;font-size:16.6px;line-height:16.6px;color:#808000;letter-spacing:0.006px;">Test</span>
<span class="m" style="left:821.00px;top:195.50px;font-size:16.6px;line-height:16.6px;color:#000;letter-spacing:0.006px;">;</span>
<span class="m" style="left:611.00px;top:222.99px;font-size:16.6px;line-height:16.6px;color:#000080;letter-spacing:0.006px;font-weight:700;">import</span>
<span class="m" style="left:681.00px;top:222.99px;font-size:16.6px;line-height:16.6px;color:#000;letter-spacing:0.006px;">org.mockito.</span>
<span class="m" style="left:801.00px;top:222.99px;font-size:16.6px;line-height:16.6px;color:#808000;letter-spacing:0.006px;">Mock</span>
<span class="m" style="left:841.00px;top:222.99px;font-size:16.6px;line-height:16.6px;color:#000;letter-spacing:0.006px;">;</span>
<span class="m" style="left:611.00px;top:277.97px;font-size:16.6px;line-height:16.6px;color:#000080;letter-spacing:0.006px;font-weight:700;">import</span>
<span class="m" style="left:681.00px;top:277.97px;font-size:16.6px;line-height:16.6px;color:#000;letter-spacing:0.006px;">java.io.ByteArrayOutputStream</span>
<span class="m" style="left:971.00px;top:277.97px;font-size:16.6px;line-height:16.6px;color:#000;letter-spacing:0.006px;">;</span>
<span class="m" style="left:611.00px;top:305.46px;font-size:16.6px;line-height:16.6px;color:#000080;letter-spacing:0.006px;font-weight:700;">import</span>
<span class="m" style="left:681.00px;top:305.46px;font-size:16.6px;line-height:16.6px;color:#000;letter-spacing:0.006px;">java.io.IOException</span>
<span class="m" style="left:871.00px;top:305.46px;font-size:16.6px;line-height:16.6px;color:#000;letter-spacing:0.006px;">;</span>
<span class="m" style="left:611.00px;top:332.95px;font-size:16.6px;line-height:16.6px;color:#000080;letter-spacing:0.006px;font-weight:700;">import</span>
<span class="m" style="left:681.00px;top:332.95px;font-size:16.6px;line-height:16.6px;color:#000;letter-spacing:0.006px;">java.io.InputStream</span>
<span class="m" style="left:871.00px;top:332.95px;font-size:16.6px;line-height:16.6px;color:#000;letter-spacing:0.006px;">;</span>
<span class="m" style="left:611.00px;top:360.44px;font-size:16.6px;line-height:16.6px;color:#000080;letter-spacing:0.006px;font-weight:700;">import</span>
<span class="m" style="left:681.00px;top:360.44px;font-size:16.6px;line-height:16.6px;color:#000;letter-spacing:0.006px;">java.nio.ByteBuffer</span>
<span class="m" style="left:871.00px;top:360.44px;font-size:16.6px;line-height:16.6px;color:#000;letter-spacing:0.006px;">;</span>
<span class="m" style="left:611.00px;top:387.93px;font-size:16.6px;line-height:16.6px;color:#000080;letter-spacing:0.006px;font-weight:700;">import</span>
<span class="m" style="left:681.00px;top:387.93px;font-size:16.6px;line-height:16.6px;color:#000;letter-spacing:0.006px;">java.util.concurrent.CountDownLatch</span>
<span class="m" style="left:1031.00px;top:387.93px;font-size:16.6px;line-height:16.6px;color:#000;letter-spacing:0.006px;">;</span>
<span class="m" style="left:611.00px;top:415.42px;font-size:16.6px;line-height:16.6px;color:#000080;letter-spacing:0.006px;font-weight:700;">import</span>
<span class="m" style="left:681.00px;top:415.42px;font-size:16.6px;line-height:16.6px;color:#000;letter-spacing:0.006px;">java.util.concurrent.TimeUnit</span>
<span class="m" style="left:971.00px;top:415.42px;font-size:16.6px;line-height:16.6px;color:#000;letter-spacing:0.006px;">;</span>
<span class="m" style="left:611.00px;top:470.40px;font-size:16.6px;line-height:16.6px;color:#000080;letter-spacing:0.006px;font-weight:700;">import</span>
<span class="m" style="left:681.00px;top:470.40px;font-size:16.6px;line-height:16.6px;color:#000;letter-spacing:0.006px;">livekit.org.webrtc.AudioTrack</span>
<span class="m" style="left:971.00px;top:470.40px;font-size:16.6px;line-height:16.6px;color:#000;letter-spacing:0.006px;">;</span>
<span class="m" style="left:611.00px;top:497.89px;font-size:16.6px;line-height:16.6px;color:#000080;letter-spacing:0.006px;font-weight:700;">import</span>
<span class="m" style="left:681.00px;top:497.89px;font-size:16.6px;line-height:16.6px;color:#000;letter-spacing:0.006px;">livekit.org.webrtc.DataChannel</span>
<span class="m" style="left:981.00px;top:497.89px;font-size:16.6px;line-height:16.6px;color:#000;letter-spacing:0.006px;">;</span>
<span class="m" style="left:611.00px;top:525.38px;font-size:16.6px;line-height:16.6px;color:#000080;letter-spacing:0.006px;font-weight:700;">import</span>
<span class="m" style="left:681.00px;top:525.38px;font-size:16.6px;line-height:16.6px;color:#000;letter-spacing:0.006px;">livekit.org.webrtc.IceCandidate</span>
<span class="m" style="left:991.00px;top:525.38px;font-size:16.6px;line-height:16.6px;color:#000;letter-spacing:0.006px;">;</span>
<span class="m" style="left:611.00px;top:552.87px;font-size:16.6px;line-height:16.6px;color:#000080;letter-spacing:0.006px;font-weight:700;">import</span>
<span class="m" style="left:681.00px;top:552.87px;font-size:16.6px;line-height:16.6px;color:#000;letter-spacing:0.006px;">livekit.org.webrtc.MediaStream</span>
<span class="m" style="left:981.00px;top:552.87px;font-size:16.6px;line-height:16.6px;color:#000;letter-spacing:0.006px;">;</span>
<span class="m" style="left:611.00px;top:580.36px;font-size:16.6px;line-height:16.6px;color:#000080;letter-spacing:0.006px;font-weight:700;">import</span>
<span class="m" style="left:681.00px;top:580.36px;font-size:16.6px;line-height:16.6px;color:#000;letter-spacing:0.006px;">livekit.org.webrtc.PeerConnection</span>
<span class="m" style="left:1011.00px;top:580.36px;font-size:16.6px;line-height:16.6px;color:#000;letter-spacing:0.006px;">;</span>
<span class="m" style="left:611.00px;top:607.85px;font-size:16.6px;line-height:16.6px;color:#000080;letter-spacing:0.006px;font-weight:700;">import</span>
<span class="m" style="left:681.00px;top:607.85px;font-size:16.6px;line-height:16.6px;color:#000;letter-spacing:0.006px;">livekit.org.webrtc.SessionDescription</span>
<span class="m" style="left:1051.00px;top:607.85px;font-size:16.6px;line-height:16.6px;color:#000;letter-spacing:0.006px;">;</span>
<span class="m" style="left:611.00px;top:635.34px;font-size:16.6px;line-height:16.6px;color:#000080;letter-spacing:0.006px;font-weight:700;">import</span>
<span class="m" style="left:681.00px;top:635.34px;font-size:16.6px;line-height:16.6px;color:#000;letter-spacing:0.006px;">livekit.org.webrtc.VideoTrack</span>
<span class="m" style="left:971.00px;top:635.34px;font-size:16.6px;line-height:16.6px;color:#000;letter-spacing:0.006px;">;</span>
<span class="m" style="left:611.00px;top:662.83px;font-size:16.6px;line-height:16.6px;color:#000080;letter-spacing:0.006px;font-weight:700;">import</span>
<span class="m" style="left:681.00px;top:662.83px;font-size:16.6px;line-height:16.6px;color:#000;letter-spacing:0.006px;">okhttp3.OkHttpClient</span>
<span class="m" style="left:881.00px;top:662.83px;font-size:16.6px;line-height:16.6px;color:#000;letter-spacing:0.006px;">;</span>
<span class="m" style="left:611.00px;top:690.32px;font-size:16.6px;line-height:16.6px;color:#000080;letter-spacing:0.006px;font-weight:700;">import</span>
<span class="m" style="left:681.00px;top:690.32px;font-size:16.6px;line-height:16.6px;color:#000;letter-spacing:0.006px;">okhttp3.Request</span>
<span class="m" style="left:831.00px;top:690.32px;font-size:16.6px;line-height:16.6px;color:#000;letter-spacing:0.006px;">;</span>
<span class="m" style="left:611.00px;top:717.81px;font-size:16.6px;line-height:16.6px;color:#000080;letter-spacing:0.006px;font-weight:700;">import</span>
<span class="m" style="left:681.00px;top:717.81px;font-size:16.6px;line-height:16.6px;color:#000;letter-spacing:0.006px;">okhttp3.Response</span>
<span class="m" style="left:841.00px;top:717.81px;font-size:16.6px;line-height:16.6px;color:#000;letter-spacing:0.006px;">;</span>
<span class="m" style="left:611.00px;top:745.30px;font-size:16.6px;line-height:16.6px;color:#000080;letter-spacing:0.006px;font-weight:700;">import</span>
<span class="m" style="left:681.00px;top:745.30px;font-size:16.6px;line-height:16.6px;color:#000;letter-spacing:0.006px;">okhttp3.WebSocket</span>
<span class="m" style="left:851.00px;top:745.30px;font-size:16.6px;line-height:16.6px;color:#000;letter-spacing:0.006px;">;</span>
<span class="m" style="left:611.00px;top:772.79px;font-size:16.6px;line-height:16.6px;color:#000080;letter-spacing:0.006px;font-weight:700;">import</span>
<span class="m" style="left:681.00px;top:772.79px;font-size:16.6px;line-height:16.6px;color:#000;letter-spacing:0.006px;">okhttp3.WebSocketListener</span>
<span class="m" style="left:931.00px;top:772.79px;font-size:16.6px;line-height:16.6px;color:#000;letter-spacing:0.006px;">;</span>
<span class="m" style="left:611.00px;top:827.77px;font-size:16.6px;line-height:16.6px;color:#000080;letter-spacing:0.006px;font-weight:700;">public</span>
<span class="m" style="left:681.00px;top:827.77px;font-size:16.6px;line-height:16.6px;color:#000080;letter-spacing:0.006px;font-weight:700;">class</span>
<span class="m" style="left:741.00px;top:827.77px;font-size:16.6px;line-height:16.6px;color:#000;letter-spacing:0.006px;">WebRTCServiceTest {</span>
<svg style="left:950px;top:828.74px;" width="11" height="12" viewBox="0 0 11 12"><circle cx="5.5" cy="3.6" r="2.4" fill="#a8a8a8"/><path d="M1 10.5 A4.5 4 0 0 1 10 10.5 Z" fill="#a8a8a8"/></svg>
<span class="s" style="left:965.00px;top:828.44px;font-size:15.6px;line-height:15.6px;color:#8a8a8a;letter-spacing:-0.081px;">Razen *</span>
<span class="m" style="left:651.00px;top:855.26px;font-size:16.6px;line-height:16.6px;color:#000080;letter-spacing:0.006px;font-weight:700;">private</span>
<span class="m" style="left:731.00px;top:855.26px;font-size:16.6px;line-height:16.6px;color:#000080;letter-spacing:0.006px;font-weight:700;">static</span>
<span class="m" style="left:801.00px;top:855.26px;font-size:16.6px;line-height:16.6px;color:#000080;letter-spacing:0.006px;font-weight:700;">final</span>
<span class="m" style="left:861.00px;top:855.26px;font-size:16.6px;line-height:16.6px;color:#000;letter-spacing:0.006px;">String </span>
<span class="m" style="left:931.00px;top:855.26px;font-size:16.6px;line-height:16.6px;color:#660e7a;letter-spacing:0.006px;font-weight:700;font-style:italic;">TAG</span>
<span class="m" style="left:961.00px;top:855.26px;font-size:16.6px;line-height:16.6px;color:#000;letter-spacing:0.006px;"> = </span>
<span class="m" style="left:991.00px;top:855.26px;font-size:16.6px;line-height:16.6px;color:#008000;letter-spacing:0.006px;font-weight:700;">"WebRTCServiceTest"</span>
<span class="m" style="left:1181.00px;top:855.26px;font-size:16.6px;line-height:16.6px;color:#000;letter-spacing:0.006px;">;</span>
<span class="s" style="left:1207.00px;top:855.93px;font-size:15.6px;line-height:15.6px;color:#8a8a8a;letter-spacing:0.129px;">49 usages</span>
<span class="m" style="left:651.00px;top:882.75px;font-size:16.6px;line-height:16.6px;color:#000080;letter-spacing:0.006px;font-weight:700;">private</span>
<span class="m" style="left:731.00px;top:882.75px;font-size:16.6px;line-height:16.6px;color:#000080;letter-spacing:0.006px;font-weight:700;">static</span>
<span class="m" style="left:801.00px;top:882.75px;font-size:16.6px;line-height:16.6px;color:#000080;letter-spacing:0.006px;font-weight:700;">final</span>
<span class="m" style="left:861.00px;top:882.75px;font-size:16.6px;line-height:16.6px;color:#000;letter-spacing:0.006px;">String </span>
<span class="m" style="left:931.00px;top:882.75px;font-size:16.6px;line-height:16.6px;color:#660e7a;letter-spacing:0.006px;font-weight:700;font-style:italic;">REAL_WEB_SOCKET_URL</span>
<span class="m" style="left:1121.00px;top:882.75px;font-size:16.6px;line-height:16.6px;color:#000;letter-spacing:0.006px;"> = </span>
<span class="m" style="left:1151.00px;top:882.75px;font-size:16.6px;line-height:16.6px;color:#008000;letter-spacing:0.006px;font-weight:700;">"ws://10.0.2.2:3000"</span>
<span class="m" style="left:1351.00px;top:882.75px;font-size:16.6px;line-height:16.6px;color:#000;letter-spacing:0.006px;">;</span>
<span class="s" style="left:1377.00px;top:883.42px;font-size:15.6px;line-height:15.6px;color:#8a8a8a;letter-spacing:-0.042px;">2 usages</span>
<span class="m" style="left:651.00px;top:910.24px;font-size:16.6px;line-height:16.6px;color:#000080;letter-spacing:0.006px;font-weight:700;">private</span>
<span class="m" style="left:731.00px;top:910.24px;font-size:16.6px;line-height:16.6px;color:#000;letter-spacing:0.006px;">WebRTCService </span>
<span class="m" style="left:871.00px;top:910.24px;font-size:16.6px;line-height:16.6px;color:#660e7a;letter-spacing:0.006px;font-weight:700;">webRTCService</span>
<span class="m" style="left:1001.00px;top:910.24px;font-size:16.6px;line-height:16.6px;color:#000;letter-spacing:0.006px;">;</span>
<span class="s" style="left:1027.00px;top:910.91px;font-size:15.6px;line-height:15.6px;color:#8a8a8a;letter-spacing:0.004px;">62 usages</span>
<span class="m" style="left:651.00px;top:937.73px;font-size:16.6px;line-height:16.6px;color:#000080;letter-spacing:0.006px;font-weight:700;">private</span>
<span class="m" style="left:731.00px;top:937.73px;font-size:16.6px;line-height:16.6px;color:#000;letter-spacing:0.006px;">CountDownLatch </span>
<span class="m" style="left:881.00px;top:937.73px;font-size:16.6px;line-height:16.6px;color:#660e7a;letter-spacing:0.006px;font-weight:700;">serviceConnectionLatch</span>
<span class="m" style="left:1101.00px;top:937.73px;font-size:16.6px;line-height:16.6px;color:#000;letter-spacing:0.006px;">;</span>
<span class="s" style="left:1127.00px;top:938.40px;font-size:15.6px;line-height:15.6px;color:#8a8a8a;letter-spacing:0.100px;">3 usages</span>
<span class="m" style="left:651.00px;top:965.22px;font-size:16.6px;line-height:16.6px;color:#000080;letter-spacing:0.006px;font-weight:700;">private</span>
<span class="m" style="left:731.00px;top:965.22px;font-size:16.6px;line-height:16.6px;color:#000;letter-spacing:0.006px;">DataChannel </span>
<span class="m" style="left:851.00px;top:965.22px;font-size:16.6px;line-height:16.6px;color:#660e7a;letter-spacing:0.006px;font-weight:700;">dataChannel</span>
<span class="m" style="left:961.00px;top:965.22px;font-size:16.6px;line-height:16.6px;color:#000;letter-spacing:0.006px;">;</span>
<span class="s" style="left:987.00px;top:965.89px;font-size:15.6px;line-height:15.6px;color:#8a8a8a;letter-spacing:-0.042px;">6 usages</span>
<span class="m" style="left:651.00px;top:992.71px;font-size:16.6px;line-height:16.6px;color:#000080;letter-spacing:0.006px;font-weight:700;">private</span>
<span class="m" style="left:731.00px;top:992.71px;font-size:16.6px;line-height:16.6px;color:#000;letter-spacing:0.006px;">WebSocket </span>
<span class="m" style="left:831.00px;top:992.71px;font-size:16.6px;line-height:16.6px;color:#660e7a;letter-spacing:0.006px;font-weight:700;">webSocket</span>
<span class="m" style="left:921.00px;top:992.71px;font-size:16.6px;line-height:16.6px;color:#000;letter-spacing:0.006px;">;</span>
<span class="s" style="left:947.00px;top:993.38px;font-size:15.6px;line-height:15.6px;color:#8a8a8a;letter-spacing:-0.042px;">5 usages</span>
<span class="m" style="left:651.00px;top:1020.20px;font-size:16.6px;line-height:16.6px;color:#000080;letter-spacing:0.006px;font-weight:700;">private</span>
<span class="m" style="left:731.00px;top:1020.20px;font-size:16.6px;line-height:16.6px;color:#000;letter-spacing:0.006px;">WebRTCServiceStarter </span>
<span class="m" style="left:941.00px;top:1020.20px;font-size:16.6px;line-height:16.6px;color:#808080;letter-spacing:0.006px;">webRTCServiceStarter</span>
<span class="m" style="left:1141.00px;top:1020.20px;font-size:16.6px;line-height:16.6px;color:#000;letter-spacing:0.006px;">;</span>
<span class="s" style="left:1167.00px;top:1020.87px;font-size:15.6px;line-height:15.6px;color:#8a8a8a;letter-spacing:0.004px;">no usages</span>
<span class="m" style="left:651.00px;top:1047.69px;font-size:16.6px;line-height:16.6px;color:#000080;letter-spacing:0.006px;font-weight:700;">private</span>
<span class="m" style="left:731.00px;top:1047.69px;font-size:16.6px;line-height:16.6px;color:#000;letter-spacing:0.006px;">ServiceConnection </span>
<div style="left:911px;top:1041.6599999999999px;width:170px;height:26px;background:#f5eac3;"></div>
<span class="m" style="left:911.00px;top:1047.69px;font-size:16.6px;line-height:16.6px;color:#660e7a;letter-spacing:0.006px;font-weight:700;">serviceConnection</span>
<span class="m" style="left:1081.00px;top:1047.69px;font-size:16.6px;line-height:16.6px;color:#000;letter-spacing:0.006px;">;</span>
<span class="s" style="left:1107.00px;top:1048.36px;font-size:15.6px;line-height:15.6px;color:#8a8a8a;letter-spacing:-0.042px;">2 usages</span>
<span class="m" style="left:651.00px;top:1102.67px;font-size:16.6px;line-height:16.6px;color:#808000;letter-spacing:0.006px;">@Mock</span>
<span class="s" style="left:717.00px;top:1103.34px;font-size:15.6px;line-height:15.6px;color:#8a8a8a;letter-spacing:0.004px;">no usages</span>
<span class="m" style="left:651.00px;top:1130.16px;font-size:16.6px;line-height:16.6px;color:#000080;letter-spacing:0.006px;font-weight:700;">private</span>
<span class="m" style="left:731.00px;top:1130.16px;font-size:16.6px;line-height:16.6px;color:#000;letter-spacing:0.006px;">WebRTCEventListener </span>
<span class="m" style="left:931.00px;top:1130.16px;font-size:16.6px;line-height:16.6px;color:#808080;letter-spacing:0.006px;">webRTCEventListener</span>
<span class="m" style="left:1121.00px;top:1130.16px;font-size:16.6px;line-height:16.6px;color:#000;letter-spacing:0.006px;">;</span>
<span class="m" style="left:651.00px;top:1185.14px;font-size:16.6px;line-height:16.6px;color:#808080;letter-spacing:0.006px;font-style:italic;">//region Setup and Teardown</span>
<span class="m" style="left:651.00px;top:1212.63px;font-size:16.6px;line-height:16.6px;color:#808000;letter-spacing:0.006px;">@Before</span>
<svg style="left:740px;top:1213.6px;" width="11" height="12" viewBox="0 0 11 12"><circle cx="5.5" cy="3.6" r="2.4" fill="#a8a8a8"/><path d="M1 10.5 A4.5 4 0 0 1 10 10.5 Z" fill="#a8a8a8"/></svg>
<span class="s" style="left:755.00px;top:1213.30px;font-size:15.6px;line-height:15.6px;color:#8a8a8a;letter-spacing:-0.081px;">Razen *</span>
<svg style="left:592px;top:238.5px;" width="11" height="10" viewBox="0 0 11 10"><path d="M.5 .5 L10.5 5 L.5 9.5 Z" fill="#adadad"/></svg>
<svg style="left:598px;top:771.6px;" width="11" height="14" viewBox="0 0 11 14"><path d="M.6 13.4 V5.4 L5.5 .8 L10.4 5.4 V13.4 Z" fill="#fff" stroke="#c4c4c4"/><path d="M3 8.5h5" stroke="#b0b0b0"/></svg>
<svg style="left:598px;top:1187.5px;" width="11" height="14" viewBox="0 0 11 14"><path d="M.6 .6 V8.6 L5.5 13.2 L10.4 8.6 V.6 Z" fill="#fff" stroke="#c4c4c4"/><path d="M3 5.5h5" stroke="#b0b0b0"/></svg>
<svg style="left:564px;top:825px;" width="20" height="20" viewBox="0 0 20 20"><circle cx="7.4" cy="7.5" r="6.6" fill="#e05561"/><path d="M7.4 3.4 V8.4" stroke="#fff" stroke-width="1.9"/><rect x="6.5" y="9.8" width="1.9" height="1.9" fill="#fff"/><path d="M10.4 7.6 L18.6 13.2 L10.4 18.6 Z" fill="#59a869" stroke="#f0f0f0" stroke-width="1"/></svg>
<div style="left:611px;top:1217px;width:1053px;height:12px;background:#000;opacity:.11;"></div>
<div style="left:2132px;top:193px;width:12px;height:120px;background:#000;opacity:.13;"></div>
<div style="left:2128px;top:289px;width:17px;height:2.2px;background:#e8c000;"></div>
<div style="left:2128px;top:295px;width:17px;height:2.2px;background:#e8c000;"></div>
<div style="left:2128px;top:302px;width:17px;height:2.2px;background:#e8c000;"></div>
<div style="left:2128px;top:539px;width:17px;height:2.2px;background:#e8c000;"></div>
<div style="left:2128px;top:625px;width:17px;height:2.2px;background:#e8c000;"></div>
<div style="left:2128px;top:644px;width:17px;height:2.2px;background:#e8c000;"></div>
<div style="left:2128px;top:661px;width:17px;height:2.2px;background:#e8c000;"></div>
<div style="left:2128px;top:730px;width:17px;height:2.2px;background:#e8c000;"></div>
<div style="left:2128px;top:784px;width:17px;height:2.2px;background:#e8c000;"></div>
<div style="left:2128px;top:1029px;width:17px;height:2.2px;background:#e8c000;"></div>
<div style="left:2128px;top:1095px;width:17px;height:2.2px;background:#ecdca0;"></div>
<div style="left:2128px;top:1142px;width:17px;height:2.2px;background:#e8c000;"></div>
<div style="left:2123px;top:184px;width:2px;height:7px;background:#8fd68f;"></div>
<div style="left:2123px;top:203px;width:2px;height:6px;background:#c4c4c4;"></div>
<div style="left:2123px;top:316px;width:2px;height:7px;background:#a9bff0;"></div>
<div style="left:2123px;top:326px;width:2px;height:6px;background:#a9bff0;"></div>
<div style="left:2123px;top:332px;width:2px;height:8px;background:#8fd68f;"></div>
<div style="left:2123px;top:344px;width:2px;height:7px;background:#a9bff0;"></div>
<div style="left:2123px;top:357px;width:2px;height:6px;background:#c4c4c4;"></div>
<div style="left:2123px;top:368px;width:2px;height:6px;background:#a9bff0;"></div>
<div style="left:2123px;top:378px;width:2px;height:7px;background:#a9bff0;"></div>
<div style="left:2123px;top:386px;width:2px;height:5px;background:#8fd68f;"></div>
<div style="left:2123px;top:394px;width:2px;height:10px;background:#a9bff0;"></div>
<div style="left:2123px;top:410px;width:2px;height:8px;background:#8fd68f;"></div>
<div style="left:2123px;top:422px;width:2px;height:14px;background:#a9bff0;"></div>
<div style="left:2123px;top:442px;width:2px;height:20px;background:#a9bff0;"></div>
<div style="left:2123px;top:470px;width:2px;height:22px;background:#a9bff0;"></div>
<div style="left:2123px;top:500px;width:2px;height:10px;background:#a9bff0;"></div>
<div style="left:2123px;top:514px;width:2px;height:4px;background:#8fd68f;"></div>
<div style="left:2123px;top:540px;width:2px;height:53px;background:#8fd68f;"></div>
<svg style="left:2012px;top:115px;" width="16" height="15" viewBox="0 0 16 15"><path d="M8 .8 L15.4 14.2 H.6 Z" fill="#edc211"/><path d="M8 5.2 V10" stroke="#fff" stroke-width="1.8"/><circle cx="8" cy="12" r="1" fill="#fff"/></svg>
<span class="s" style="left:2031.00px;top:114.95px;font-size:17.3px;line-height:17.3px;color:#6b6b6b;letter-spacing:-1.200px;">14</span>
<svg style="left:2058px;top:115px;" width="16" height="15" viewBox="0 0 16 15"><path d="M8 .8 L15.4 14.2 H.6 Z" fill="#e3d7ab"/><path d="M8 5.2 V10" stroke="#fff" stroke-width="1.8"/><circle cx="8" cy="12" r="1" fill="#fff"/></svg>
<span class="s" style="left:2078.50px;top:114.95px;font-size:17.3px;line-height:17.3px;color:#6b6b6b;">1</span>
<svg style="left:2098px;top:117px;" width="12" height="12" viewBox="0 0 12 12"><path d="M1.5 8.2 L6 3.7 L10.5 8.2" fill="none" stroke="#6e6e6e" stroke-width="1.5"/></svg>
<svg style="left:2124px;top:117px;" width="12" height="12" viewBox="0 0 12 12"><path d="M1.5 3.8 L6 8.3 L10.5 3.8" fill="none" stroke="#6e6e6e" stroke-width="1.5"/></svg>
<div style="left:521px;top:72px;width:1624px;height:33px;overflow:hidden">
<span class="s" style="left:-54.00px;top:9.35px;font-size:17.3px;line-height:17.3px;color:#2440a2;letter-spacing:0.357px;">SignalingManager.java</span>
</div>
<svg style="left:656px;top:81px;" width="16" height="16" viewBox="0 0 16 16"><path d="M3.5 3.5 L12.5 12.5 M12.5 3.5 L3.5 12.5" stroke="#a0a0a0" stroke-width="1.2" fill="none"/></svg>
<svg style="left:689px;top:80px;" width="18" height="18" viewBox="0 0 16 16"><circle cx="8" cy="8" r="7.95" fill="#87cfe4"/><path d="M10.4 5.9 A3.2 3.2 0 1 0 10.4 10.1" fill="none" stroke="#3d5a68" stroke-width="1.45"/></svg>
<span class="s" style="left:714.00px;top:81.35px;font-size:17.3px;line-height:17.3px;color:#000;letter-spacing:-0.107px;">PeerConnectionManager.java</span>
<svg style="left:946px;top:81px;" width="16" height="16" viewBox="0 0 16 16"><path d="M3.5 3.5 L12.5 12.5 M12.5 3.5 L3.5 12.5" stroke="#a0a0a0" stroke-width="1.2" fill="none"/></svg>
<svg style="left:978.5px;top:80px;" width="18" height="18" viewBox="0 0 16 16"><circle cx="8" cy="8" r="7.95" fill="#87cfe4"/><path d="M10.4 5.9 A3.2 3.2 0 1 0 10.4 10.1" fill="none" stroke="#3d5a68" stroke-width="1.45"/></svg>
<span class="s" style="left:1004.00px;top:81.35px;font-size:17.3px;line-height:17.3px;color:#000;letter-spacing:-0.143px;">DataChannelManager.java</span>
<svg style="left:1212px;top:81px;" width="16" height="16" viewBox="0 0 16 16"><path d="M3.5 3.5 L12.5 12.5 M12.5 3.5 L3.5 12.5" stroke="#a0a0a0" stroke-width="1.2" fill="none"/></svg>
<svg style="left:1245px;top:80px;" width="18" height="18" viewBox="0 0 16 16"><circle cx="8" cy="8" r="7.95" fill="#87cfe4"/><path d="M10.4 5.9 A3.2 3.2 0 1 0 10.4 10.1" fill="none" stroke="#3d5a68" stroke-width="1.45"/></svg>
<span class="s" style="left:1270.00px;top:81.35px;font-size:17.3px;line-height:17.3px;color:#000;letter-spacing:0.153px;">CustomPeerConnectionObserver.java</span>
<span class="s" style="left:1917.00px;top:81.35px;font-size:17.3px;line-height:17.3px;color:#2440a2;letter-spacing:-0.122px;">.gradle.kts (:app)</span>
<span class="s" style="left:1875.98px;top:81.35px;font-size:17.3px;line-height:17.3px;color:#2440a2;letter-spacing:0.200px;">build</span>
<svg style="left:2052px;top:81px;" width="16" height="16" viewBox="0 0 16 16"><path d="M3.5 3.5 L12.5 12.5 M12.5 3.5 L3.5 12.5" stroke="#a0a0a0" stroke-width="1.2" fill="none"/></svg>
<svg style="left:2090px;top:82px;" width="16" height="14" viewBox="0 0 16 14"><path d="M2.5 4 L8 9.5 L13.5 4" fill="none" stroke="#5e5e5e" stroke-width="1.7"/></svg>
<svg style="left:2126px;top:80px;" width="8" height="18" viewBox="0 0 8 18"><circle cx="4" cy="2.5" r="1.7" fill="#5e5e5e"/><circle cx="4" cy="9" r="1.7" fill="#5e5e5e"/><circle cx="4" cy="15.5" r="1.7" fill="#5e5e5e"/></svg>
<svg style="left:1455px;top:44px;" width="22" height="20" viewBox="0 0 22 20"><path d="M2 6.5 L7.5 1.5 L10.8 2.2 L8 5 L19.5 17 L17 19.3 L5.6 7.6 L4 9 Z" fill="#59a869"/></svg>
<svg style="left:1485px;top:51px;" width="12" height="8" viewBox="0 0 12 8"><path d="M1 1.5 H11 L6 7 Z" fill="#6e6e6e"/></svg>
<div style="left:1509.5px;top:40px;width:224px;height:27px;background:#fff;border:1px solid #c4c4c4;border-radius:5px;"></div>
<svg style="left:1521px;top:44px;" width="20" height="18" viewBox="0 -1 17 16"><g opacity="1"><path d="M0.8 13.5 A7.2 7.2 0 0 1 15.2 13.5 Z" fill="#9fe3bd"/><path d="M3.6 7.6 L2 4.8 M12.4 7.6 L14 4.8" stroke="#9fe3bd" stroke-width="1.1"/><circle cx="4.9" cy="10.6" r=".8" fill="#fff"/><circle cx="11.1" cy="10.6" r=".8" fill="#fff"/></g><path d="M13.2 .1 V5.7 L9.7 2.9 Z" fill="#f4a98c"/><path d="M13.8 .1 L17.6 2.9 L13.8 5.7 Z" fill="#a4d89a"/></svg>
<span class="s" style="left:1545.00px;top:45.35px;font-size:17.3px;line-height:17.3px;color:#000;letter-spacing:-0.266px;">WebRTCServiceTest</span>
<svg style="left:1710px;top:50px;" width="12" height="8" viewBox="0 0 12 8"><path d="M0.5 1 H11.5 L6 7.5 Z" fill="#6e6e6e"/></svg>
<div style="left:1741.5px;top:40px;width:205px;height:27px;background:#fff;border:1px solid #c4c4c4;border-radius:5px;"></div>
<svg style="left:1757px;top:44px;" width="18" height="20" viewBox="0 0 18 20"><rect x="1.2" y="1.6" width="9.6" height="14" rx="1.5" fill="none" stroke="#9aa7b0" stroke-width="1.6"/><rect x="7.4" y="9.6" width="9.6" height="8.8" fill="#f2f2f2"/><rect x="8.6" y="10.8" width="6.6" height="5" fill="#e8defa" stroke="#a371d6" stroke-width="1.2"/><path d="M8 17.6 H13" stroke="#a371d6" stroke-width="1.2"/><circle cx="14.6" cy="15.6" r="2.9" fill="#22d322"/></svg>
<span class="s" style="left:1778.00px;top:45.35px;font-size:17.3px;line-height:17.3px;color:#000;letter-spacing:-0.165px;">Pixel 8 Pro API 33</span>
<svg style="left:1924px;top:50px;" width="12" height="8" viewBox="0 0 12 8"><path d="M0.5 1 H11.5 L6 7.5 Z" fill="#6e6e6e"/></svg>
<svg style="left:1962px;top:45px;" width="16" height="18" viewBox="0 0 16 18"><path d="M1.8 1.6 L14.3 9 L1.8 16.4 Z" fill="#59a869"/></svg>
<svg style="left:1993.25px;top:45px;" width="16" height="19" viewBox="0 0 16 19"><path d="M4.5 .9 L7.6 3.9 M11.5 .9 L8.4 3.9" stroke="#59a869" stroke-width="1.9" fill="none" stroke-linecap="round"/><ellipse cx="8" cy="10.7" rx="4.75" ry="7.3" fill="#59a869"/><path d="M3.6 6.6 H1.2 M12.4 6.6 H14.8 M3.6 10.6 H1.2 M12.4 10.6 H14.8 M3.6 14.7 H1.2 M12.4 14.7 H14.8" stroke="#59a869" stroke-width="2.2" fill="none" stroke-linecap="round"/><path d="M5.8 8.75 h4.4 M5.8 12.8 h4.4" stroke="#f2f2f2" stroke-width="1.3"/></svg>
<svg style="left:2024px;top:45.6px;" width="21" height="20" viewBox="0 0 21 20"><path d="M1 2.4 L7.4 .9 L13.8 2.4 V8.4 Q13.8 13.4 7.4 16.2 Q1 13.4 1 8.4 Z" fill="#bdbdbd"/><path d="M7.7 4.6 H11.7 V9 Q11.6 11.6 7.7 13.6 Z" fill="#f2f2f2"/><path d="M10.6 7.4 L20.2 13 L10.6 18.8 Z" fill="#c6c6c6" stroke="#f2f2f2" stroke-width="1.1"/></svg>
<svg style="left:2056px;top:46px;" width="20" height="15" viewBox="0 0 20 15"><path d="M2.4 13.6 A7.8 7.8 0 0 1 4.6 5.2" fill="none" stroke="#59a869" stroke-width="3"/><path d="M7 3.4 A7.8 7.8 0 0 1 17.6 13.6" fill="none" stroke="#6e6e6e" stroke-width="3"/><path d="M5.4 4.2 L11.4 12.6" stroke="#6e6e6e" stroke-width="3"/></svg>
<svg style="left:2084px;top:51px;" width="12" height="8" viewBox="0 0 12 8"><path d="M1 1.5 H11 L6 7 Z" fill="#6e6e6e"/></svg>
<svg style="left:2110px;top:45px;" width="20" height="20" viewBox="0 0 18 18"><path d="M4.5 .9 L7.6 3.9 M11.5 .9 L8.4 3.9" stroke="#59a869" stroke-width="1.9" fill="none" stroke-linecap="round"/><ellipse cx="8" cy="10.7" rx="4.75" ry="7.3" fill="#59a869"/><path d="M3.6 6.6 H1.2 M12.4 6.6 H14.8 M3.6 10.6 H1.2 M12.4 10.6 H14.8 M3.6 14.7 H1.2 M12.4 14.7 H14.8" stroke="#59a869" stroke-width="2.2" fill="none" stroke-linecap="round"/><path d="M5.8 8.75 h4.4 M5.8 12.8 h4.4" stroke="#f2f2f2" stroke-width="1.3"/><path d="M9 17.4 L16.4 10 M11 9.4 H17 V15.4" stroke="#f2f2f2" stroke-width="4.6" fill="none"/><path d="M9.2 17.2 L16 10.4" stroke="#6e6e6e" stroke-width="2.3" fill="none"/><path d="M10.8 9.2 H17.2 V15.6 Z" fill="#6e6e6e"/></svg>
<div style="left:2144px;top:48px;width:12px;height:12px;background:#c4c4c4;"></div>
<div style="left:2170px;top:42px;width:1px;height:24px;background:#cfcfcf;"></div>
<span class="s" style="left:2183.50px;top:45.35px;font-size:17.3px;line-height:17.3px;color:#000;letter-spacing:-0.297px;">Git:</span>
<svg style="left:2223px;top:45px;" width="17" height="17" viewBox="0 0 17 17"><path d="M15.4 1.6 L5.6 11.4" stroke="#389fd6" stroke-width="2.9" fill="none"/><path d="M1.4 15.6 V5.2 L11.8 15.6 Z" fill="#389fd6"/></svg>
<svg style="left:2255px;top:45px;" width="20" height="17" viewBox="0 0 20 17"><path d="M1.6 8.8 L7 14 L17.4 2.4" stroke="#59a869" stroke-width="3" fill="none"/></svg>
<svg style="left:2288px;top:45px;" width="17" height="17" viewBox="0 0 17 17"><path d="M1.6 15.4 L11.4 5.6" stroke="#59a869" stroke-width="2.9" fill="none"/><path d="M15.6 1.4 H5.2 L15.6 11.8 Z" fill="#59a869"/></svg>
<svg style="left:2319px;top:44px;" width="20" height="20" viewBox="0 0 20 20"><circle cx="10" cy="10" r="8" fill="none" stroke="#6e6e6e" stroke-width="2"/><path d="M10 5 V10.4 L13.4 13" stroke="#6e6e6e" stroke-width="2" fill="none"/></svg>
<svg style="left:2353px;top:45px;" width="19" height="18" viewBox="0 0 19 18"><path d="M4 5.6 H11 A5 5 0 0 1 11 15.6 H5" stroke="#6e6e6e" stroke-width="2.2" fill="none"/><path d="M7.4 .6 L1 5.6 L7.4 10.6 Z" fill="#6e6e6e"/></svg>
<div style="left:2381px;top:42px;width:1px;height:24px;background:#cfcfcf;"></div>
<svg style="left:2393px;top:45px;" width="22" height="20" viewBox="0 0 22 20"><path d="M1 14.4 Q0 6.6 6.4 5 Q9.6 4.2 12.6 5.8 Q14.4 2.4 17.2 2.6 Q19.6 3.2 19 5.8 Q18.2 4.2 16.6 4.6 Q15.2 5.4 15.8 8 Q16.6 12.4 12.6 13 V14.4 H9.8 V12.6 H6.8 V14.4 Z" fill="#6e6e6e"/><path d="M20 10.4 L13 17.4 M11.6 11.6 V18.6 H18.6" stroke="#f2f2f2" stroke-width="4.6" fill="none"/><path d="M19.6 10.8 L14.6 15.8" stroke="#389fd6" stroke-width="2.6" fill="none"/><path d="M11.6 18.8 V11.4 L19 18.8 Z" fill="#389fd6"/></svg>
<svg style="left:2428px;top:45px;" width="18" height="20" viewBox="0 0 18 20"><rect x="1.6" y="1.4" width="8.8" height="13.8" rx="1.4" fill="none" stroke="#6e6e6e" stroke-width="2"/><rect x="4.6" y="9.6" width="13.4" height="10.4" fill="#f2f2f2"/><path d="M5.8 18.8 A5.6 5.6 0 0 1 17 18.8 Z" fill="#3ddc84"/><path d="M8 14.2 L6.8 12.2 M14.8 14.2 L16 12.2" stroke="#3ddc84" stroke-width="1.1"/></svg>
<div style="left:2455px;top:42px;width:1px;height:24px;background:#cfcfcf;"></div>
<svg style="left:2466px;top:44px;" width="20" height="20" viewBox="0 0 20 20"><circle cx="8.4" cy="8.4" r="6" fill="none" stroke="#6e6e6e" stroke-width="2.5"/><path d="M12.8 12.8 L18.6 18.6" stroke="#6e6e6e" stroke-width="2.8"/></svg>
<svg style="left:2499px;top:44px;" width="20" height="20" viewBox="0 0 20 20"><circle cx="10" cy="10" r="10" fill="#f0a30a"/><path d="M10 15.4 V6.4 M5.8 10.2 L10 6 L14.2 10.2" stroke="#fff" stroke-width="2.2" fill="none"/></svg>
<svg style="left:2531px;top:44px;" width="20" height="20" viewBox="0 0 20 20"><rect width="20" height="20" fill="#9fc3fb"/><circle cx="10" cy="7.6" r="3.7" fill="#3f76e4"/><path d="M3.8 20 V16 Q3.8 12.6 7 12.6 H13 Q16.2 12.6 16.2 16 V20 Z" fill="#3f76e4"/></svg>
<div style="left:2146px;top:105px;width:388px;height:1px;background:#d1d1d1;"></div>
<div style="left:2146px;top:141px;width:388px;height:1px;background:#d1d1d1;"></div>
<div style="left:2534px;top:72px;width:1px;height:1255px;background:#d1d1d1;"></div>
<span class="s" style="left:2154.00px;top:81.35px;font-size:17.3px;line-height:17.3px;color:#000;letter-spacing:-0.164px;">Running Devices:</span>
<svg style="left:2314px;top:80px;" width="18" height="20" viewBox="0 0 18 20"><rect x="1.2" y="1.6" width="9.6" height="14" rx="1.5" fill="none" stroke="#9aa7b0" stroke-width="1.6"/><rect x="7.4" y="9.6" width="9.6" height="8.8" fill="#f2f2f2"/><rect x="8.6" y="10.8" width="6.6" height="5" fill="#e8defa" stroke="#a371d6" stroke-width="1.2"/><path d="M8 17.6 H13" stroke="#a371d6" stroke-width="1.2"/><circle cx="14.6" cy="15.6" r="2.9" fill="#22d322"/></svg>
<div style="left:2335px;top:72px;width:92.5px;height:33px;overflow:hidden">
<span class="s" style="left:0.00px;top:9.35px;font-size:17.3px;line-height:17.3px;color:#000;letter-spacing:-0.165px;">Pixel 8 Pro API 33</span>
</div>
<div style="left:2296px;top:102px;width:131px;height:3.2px;background:#a4adc4;border-radius:1.5px;"></div>
<svg style="left:2436px;top:81px;" width="17" height="16" viewBox="0 0 17 16"><rect x="1" y="1" width="15" height="14" fill="none" stroke="#6e6e6e" stroke-width="1.6"/><rect x="1" y="1" width="15" height="4" fill="#6e6e6e"/></svg>
<div style="left:2464px;top:77px;width:1px;height:24px;background:#d1d1d1;"></div>
<svg style="left:2477px;top:82px;" width="16" height="16" viewBox="0 0 16 16"><rect x="5.9" y="0" width="4.2" height="3.6" rx=".5" fill="#6e6e6e" transform="rotate(0 8 8)"/><rect x="5.9" y="0" width="4.2" height="3.6" rx=".5" fill="#6e6e6e" transform="rotate(60 8 8)"/><rect x="5.9" y="0" width="4.2" height="3.6" rx=".5" fill="#6e6e6e" transform="rotate(120 8 8)"/><rect x="5.9" y="0" width="4.2" height="3.6" rx=".5" fill="#6e6e6e" transform="rotate(180 8 8)"/><rect x="5.9" y="0" width="4.2" height="3.6" rx=".5" fill="#6e6e6e" transform="rotate(240 8 8)"/><rect x="5.9" y="0" width="4.2" height="3.6" rx=".5" fill="#6e6e6e" transform="rotate(300 8 8)"/><circle cx="8" cy="8" r="4.35" fill="none" stroke="#6e6e6e" stroke-width="3"/></svg>
<svg style="left:2510px;top:82px;" width="16" height="16" viewBox="0 0 16 16"><rect x=".2" y="6.9" width="15.6" height="2.2" fill="#6e6e6e"/></svg>
<svg style="left:2156px;top:115px;" width="18" height="18" viewBox="0 0 18 18"><path d="M5.2 4 A6.7 6.7 0 1 0 12.8 4" fill="none" stroke="#6e6e6e" stroke-width="2.4"/><path d="M9 .6 V8.6" stroke="#6e6e6e" stroke-width="2.4"/></svg>
<svg style="left:2189px;top:115px;" width="19" height="18" viewBox="0 0 19 18"><path d="M1 6.2 H4.6 L9.4 2 V16 L4.6 11.8 H1 Z" fill="#6e6e6e"/><path d="M11.4 6.2 A3.4 3.4 0 0 1 11.4 11.8 Z" fill="#6e6e6e"/><path d="M12.4 3 A7 7 0 0 1 12.4 15" fill="none" stroke="#6e6e6e" stroke-width="1.9"/></svg>
<svg style="left:2223px;top:115px;" width="16" height="18" viewBox="0 0 16 18"><path d="M1 6.2 H4.6 L9.4 2 V16 L4.6 11.8 H1 Z" fill="#6e6e6e"/><path d="M11.4 5.6 A4 4 0 0 1 11.4 12.4 Z" fill="#6e6e6e"/></svg>
<div style="left:2250px;top:113px;width:1px;height:24px;background:#d1d1d1;"></div>
<svg style="left:2261px;top:114px;" width="20" height="20" viewBox="0 0 20 20"><rect x="1.2" y="3" width="8" height="14" rx="1.2" fill="none" stroke="#6e6e6e" stroke-width="1.7"/><path d="M14.6 4.6 Q19 10 13 16.4" fill="none" stroke="#389fd6" stroke-width="2.5"/><path d="M11 4.4 L17.2 1.6 L16.6 8 Z" fill="#389fd6"/></svg>
<svg style="left:2296px;top:118px;" width="12" height="10" viewBox="0 0 12 10"><path d="M1.4 1.4 L5 5 L1.4 8.6 M6.8 1.4 L10.4 5 L6.8 8.6" fill="none" stroke="#8c8c8c" stroke-width="1.2"/></svg>
<svg style="left:2323px;top:114px;" width="20" height="18" viewBox="0 0 20 18"><path d="M1 9 V1 H13" fill="none" stroke="#6e6e6e" stroke-width="1.4"/><path d="M3.6 12.4 V4 H16.4 V8" fill="none" stroke="#6e6e6e" stroke-width="1.4"/><circle cx="11.6" cy="10.6" r="3" fill="none" stroke="#6e6e6e" stroke-width="1.4"/><path d="M13.8 12.8 L17 16" stroke="#6e6e6e" stroke-width="1.6"/><path d="M3.6 12.4 H7" stroke="#6e6e6e" stroke-width="1.4"/></svg>
<div style="left:2353px;top:113px;width:1px;height:24px;background:#d1d1d1;"></div>
<svg style="left:2366px;top:115px;" width="18" height="17" viewBox="0 0 18 17"><path d="M9 1 L17.4 16 H.6 Z" fill="#f4af3d"/><path d="M9 6 V11.2" stroke="#fff" stroke-width="2"/><circle cx="9" cy="13.4" r="1.1" fill="#fff"/></svg>
<span class="s" style="left:2388.00px;top:116.35px;font-size:17.3px;line-height:17.3px;color:#000;letter-spacing:-0.028px;">Live Edit disabled</span>
<div style="left:2535px;top:1168px;width:25px;height:159px;background:#bdbdbd;"></div>
<svg style="left:2535px;top:103.0px;" width="24" height="48" viewBox="0 0 24 48"><text transform="translate(6.6,24.0) rotate(90)" text-anchor="middle" textLength="44" lengthAdjust="spacing" font-family="Liberation Sans, sans-serif" font-size="15.5" font-weight="400" fill="#1a1a1a">Gemini</text></svg>
<svg style="left:2535px;top:198.0px;" width="24" height="109" viewBox="0 0 24 109"><text transform="translate(6.6,54.5) rotate(90)" text-anchor="middle" textLength="105" lengthAdjust="spacing" font-family="Liberation Sans, sans-serif" font-size="15.5" font-weight="400" fill="#1a1a1a">Device Manager</text></svg>
<svg style="left:2535px;top:358.0px;" width="24" height="126" viewBox="0 0 24 126"><text transform="translate(6.6,63.0) rotate(90)" text-anchor="middle" textLength="122" lengthAdjust="spacing" font-family="Liberation Sans, sans-serif" font-size="15.5" font-weight="400" fill="#1a1a1a">App Links Assistant</text></svg>
<svg style="left:2535px;top:532.0px;" width="24" height="46.5" viewBox="0 0 24 46.5"><text transform="translate(6.6,23.25) rotate(90)" text-anchor="middle" textLength="42.5" lengthAdjust="spacing" font-family="Liberation Sans, sans-serif" font-size="15.5" font-weight="400" fill="#1a1a1a">Gradle</text></svg>
<svg style="left:2535px;top:623.0px;" width="24" height="84" viewBox="0 0 24 84"><text transform="translate(6.6,42.0) rotate(90)" text-anchor="middle" textLength="80" lengthAdjust="spacing" font-family="Liberation Sans, sans-serif" font-size="15.5" font-weight="400" fill="#1a1a1a">Notifications</text></svg>
<svg style="left:2535px;top:753.0px;" width="24" height="69" viewBox="0 0 24 69"><text transform="translate(6.6,34.5) rotate(90)" text-anchor="middle" textLength="65" lengthAdjust="spacing" font-family="Liberation Sans, sans-serif" font-size="15.5" font-weight="400" fill="#1a1a1a">EasyCode</text></svg>
<svg style="left:2535px;top:939.0px;" width="24" height="66" viewBox="0 0 24 66"><text transform="translate(6.6,33.0) rotate(90)" text-anchor="middle" textLength="62" lengthAdjust="spacing" font-family="Liberation Sans, sans-serif" font-size="15.5" font-weight="400" fill="#1a1a1a">Coverage</text></svg>
<svg style="left:2535px;top:1051.0px;" width="24" height="103" viewBox="0 0 24 103"><text transform="translate(6.6,51.5) rotate(90)" text-anchor="middle" textLength="99" lengthAdjust="spacing" font-family="Liberation Sans, sans-serif" font-size="15.5" font-weight="400" fill="#1a1a1a">Device Explorer</text></svg>
<svg style="left:2535px;top:1205.0px;" width="24" height="109" viewBox="0 0 24 109"><text transform="translate(6.6,54.5) rotate(90)" text-anchor="middle" textLength="105" lengthAdjust="spacing" font-family="Liberation Sans, sans-serif" font-size="15.5" font-weight="400" fill="#1a1a1a">Running Devices</text></svg>
<svg style="left:2539px;top:83px;" width="16" height="16" viewBox="0 0 16 16"><path d="M8 .5 Q8.6 7.4 15.5 8 Q8.6 8.6 8 15.5 Q7.4 8.6 .5 8 Q7.4 7.4 8 .5 Z" fill="#6e6e6e"/></svg>
<svg style="left:2539px;top:177px;" width="16" height="16" viewBox="0 0 16 16"><rect x="1.5" y="1.5" width="9" height="12" rx="1" fill="none" stroke="#6e6e6e" stroke-width="1.6"/><rect x="6" y="8" width="10" height="8" fill="#f2f2f2"/><path d="M7 15 A4.3 4.3 0 0 1 15.6 15 Z" fill="#6e6e6e"/><path d="M8.6 11.2 L7.8 9.8 M14 11.2 L14.8 9.8" stroke="#6e6e6e" stroke-width=".9"/></svg>
<svg style="left:2538px;top:337px;" width="18" height="16" viewBox="0 0 18 16"><path d="M7 4 H5 A4 4 0 0 0 5 12 H7 M11 4 H13 A4 4 0 0 1 13 12 H11 M6 8 H12" fill="none" stroke="#6e6e6e" stroke-width="1.7"/></svg>
<svg style="left:2538px;top:510px;" width="18" height="16" viewBox="0 0 18 16"><path d="M1 12.8 Q.6 6.8 5.4 5.6 Q8 5 10.4 6.2 Q12 3.6 14.2 3.6 Q16.2 4 15.8 6 Q15.2 4.8 13.9 5.2 Q12.9 5.8 13.2 7.6 Q13.8 11.2 10.6 11.6 V13 H8.2 V11.2 H5.6 V13 H1 Z" fill="#6e6e6e"/></svg>
<svg style="left:2539px;top:599px;" width="18" height="17" viewBox="0 0 18 17"><path d="M2 12.6 Q3.6 10.6 3.6 7.4 Q3.6 3 8 3 Q12.4 3 12.4 7.4 Q12.4 10.6 14 12.6 Z" fill="#6e6e6e"/><path d="M6.2 14 H9.8" stroke="#6e6e6e" stroke-width="1.8"/><circle cx="13" cy="3.2" r="2.7" fill="#389fd6" stroke="#f2f2f2" stroke-width=".8"/></svg>
<svg style="left:2540px;top:731px;" width="15" height="15" viewBox="0 0 15 15"><path d="M1.5 2 V13 M5 2.4 H13.5 M5 7.5 H11.5 M5 12.6 H13.5" fill="none" stroke="#6e6e6e" stroke-width="1.9"/></svg>
<svg style="left:2539px;top:918px;" width="16" height="17" viewBox="0 0 16 17"><path d="M1.6 2.2 L8 .8 L14.4 2.2 V8 Q14.4 13 8 16 Q1.6 13 1.6 8 Z" fill="#6e6e6e"/><path d="M8 2.6 V14 Q3.4 11.6 3.4 8 V3.6 Z" fill="#f2f2f2"/></svg>
<svg style="left:2540px;top:1029px;" width="14" height="17" viewBox="0 0 14 17"><rect x="1.2" y="1.2" width="11.6" height="14.6" rx="1.4" fill="none" stroke="#6e6e6e" stroke-width="1.6"/><path d="M5 13.4 H9" stroke="#6e6e6e" stroke-width="1.3"/></svg>
<svg style="left:2539px;top:1182px;" width="18" height="18" viewBox="0 0 18 18"><rect x="1.2" y="1.6" width="9" height="13" rx="1.3" fill="none" stroke="#6e6e6e" stroke-width="1.5"/><rect x="8" y="9.6" width="7.6" height="7.6" fill="#a371d6"/><circle cx="12.6" cy="13.8" r="2.7" fill="#1ed11e"/></svg>
<svg style="left:2140px;top:270px;" width="395" height="830" viewBox="0 0 395 830"><defs>
<linearGradient id="frm" x1="0" y1="0" x2="1" y2="0"><stop offset="0" stop-color="#7e7e7e"/><stop offset=".012" stop-color="#3c3c3c"/><stop offset=".08" stop-color="#2e2e2e"/><stop offset=".92" stop-color="#3a3a3a"/><stop offset=".985" stop-color="#6a6a6a"/><stop offset=".995" stop-color="#b0b0b0"/><stop offset="1" stop-color="#909090"/></linearGradient>
<linearGradient id="frv" x1="0" y1="0" x2="0" y2="1"><stop offset="0" stop-color="#9a9a9a"/><stop offset=".06" stop-color="#777" stop-opacity=".6"/><stop offset=".94" stop-color="#777" stop-opacity=".6"/><stop offset="1" stop-color="#8a8a8a"/></linearGradient>
<linearGradient id="scrim" x1="0" y1="0" x2="0" y2="1"><stop offset="0" stop-color="#14141e" stop-opacity=".34"/><stop offset=".3" stop-color="#14141e" stop-opacity=".16"/><stop offset=".7" stop-color="#14141e" stop-opacity=".04"/><stop offset="1" stop-color="#14141e" stop-opacity="0"/></linearGradient>
<linearGradient id="blu" x1="0" y1="1" x2="1" y2="0"><stop offset="0" stop-color="#7f9ee0"/><stop offset=".5" stop-color="#8faae4"/><stop offset="1" stop-color="#b4c5f0"/></linearGradient>
<clipPath id="scr"><rect x="21" y="21.6" width="354.7" height="788.5" rx="23" ry="23"/></clipPath>
<filter color-interpolation-filters="sRGB" id="b6" x="-20%" y="-20%" width="140%" height="140%"><feGaussianBlur stdDeviation="5"/></filter>
<filter color-interpolation-filters="sRGB" id="b14" x="-20%" y="-20%" width="140%" height="140%"><feGaussianBlur stdDeviation="10"/></filter>
<filter color-interpolation-filters="sRGB" id="b9" x="-40%" y="-40%" width="180%" height="180%"><feGaussianBlur stdDeviation="8"/></filter>
<filter color-interpolation-filters="sRGB" id="b2" x="-20%" y="-20%" width="140%" height="140%"><feGaussianBlur stdDeviation="1.4"/></filter>
<filter color-interpolation-filters="sRGB" id="b3" x="-20%" y="-20%" width="140%" height="140%"><feGaussianBlur stdDeviation="2.5"/></filter>
<filter id="sh" x="-20%" y="-20%" width="140%" height="140%"><feDropShadow dx="0" dy="1" stdDeviation="1" flood-color="#000" flood-opacity=".45"/></filter>
</defs><rect x="6.2" y="7.3" width="383.4" height="816.3" rx="42" fill="#000"/><rect x="8.2" y="9.3" width="379.4" height="812.3" rx="40" fill="none" stroke="url(#frm)" stroke-width="4"/><rect x="6.7" y="7.8" width="382.4" height="815.3" rx="41.5" fill="none" stroke="url(#frv)" stroke-width="1"/><rect x="389.6" y="76" width="2.6" height="7" fill="#4a4a4a"/><rect x="389.6" y="198" width="2.6" height="7" fill="#4a4a4a"/><rect x="389.6" y="265" width="2.6" height="7" fill="#4a4a4a"/><rect x="389.6" y="311" width="2.6" height="5" fill="#4a4a4a"/><g clip-path="url(#scr)"><rect x="15" y="15" width="370" height="800" fill="#0d0d18"/><path d="M0 315 L21 303 L60 292 L122 274 L183 244 L212 224 L224 200 L234 182 L250 171 L290 166 L308 172 L318 172 L332 164 L348 152 L360 134 L367 118 L370 102 L371 80 L372 0 L0 0 Z" fill="url(#blu)" filter="url(#b6)"/><path d="M-10 230 L21 216 L70 182 L122 151 L170 132 L214 121 L250 114 L250 -10 L-10 -10 Z" fill="#e2e3f0" filter="url(#b14)"/><path d="M206 123.5 L228 119.5 L280 109 L330 101 L368 94.5 L390 91 L390 10 L150 10 L160 110 Z" fill="#e0e1ef" filter="url(#b2)"/><path d="M222 230 L228 198 L238 178 L252 167 L272 161 L296 160 L316 167 L330 163 L360 200 L390 250 L390 370 L190 370 L205 290 Z" fill="#0d0d18" filter="url(#b9)" opacity=".85"/><rect x="15" y="18" width="370" height="84" fill="url(#scrim)"/><ellipse cx="372" cy="76" rx="4" ry="15" fill="#3a2a14" filter="url(#b3)" opacity=".8"/><ellipse cx="373" cy="52" rx="3" ry="22" fill="#5a4a34" filter="url(#b3)" opacity=".3"/><path d="M190 810 Q280 690 380 550" stroke="#1a2350" stroke-width="10" fill="none" opacity=".35" filter="url(#b3)"/></g><circle cx="198" cy="42" r="11" fill="#050508"/><circle cx="198.6" cy="41.6" r="3.2" fill="#22223a"/><circle cx="199.4" cy="40.6" r="1" fill="#7a6aa8"/><text x="27.5" y="36" font-family="Liberation Sans, sans-serif" font-size="11.4" fill="#fff" textLength="20.5" lengthAdjust="spacingAndGlyphs">2:17</text><path d="M57.4 27.2 H63 V35.8 H55.2 V29.6 Z" fill="#fff"/><path d="M318 29.4 Q324.2 24.6 330.4 29.4 L324.2 36.4 Z" fill="#fff"/><path d="M341.6 26.6 V36.2 H332 Z" fill="#fff"/><path d="M347 28 H348.6 V26.8 H351.4 V28 H353 V36.4 H347 Z" fill="#fff"/><text x="53.5" y="127" font-family="Liberation Sans, sans-serif" font-size="15.4" fill="#fff" textLength="80" lengthAdjust="spacingAndGlyphs" filter="url(#sh)">Thu, Feb 27</text><circle cx="74" cy="528.3" r="23.6" fill="#fff"/><g transform="translate(74,528.3)"><path d="M-11.4 -12.6 L1.2 0 L-11.4 12.6 Z" fill="#4285f4"/><path d="M-11.4 -12.6 L5.6 -3 L1.2 1.2 Z" fill="#34a853" transform="translate(0,-.6)"/><path d="M-11.4 12.6 L5.6 3 L1.2 -1.2 Z" fill="#ea4335" transform="translate(0,.6)"/><path d="M5 -4.4 L13.4 0 L5 4.4 L.6 0 Z" fill="#fbbc04"/></g><circle cx="156" cy="528.3" r="23.6" fill="#fff"/><g transform="translate(156,528.3)"><path d="M-15 -9 V11 H-9 V-3.6 Z" fill="#4285f4"/><path d="M15 -9 V11 H9 V-3.6 Z" fill="#34a853"/><path d="M-15 -9 L-9 -3.6 L0 3.2 L9 -3.6 L15 -9 L12.6 -11.4 Q11 -12.4 9.4 -11 L0 -4 L-9.4 -11 Q-11 -12.4 -12.6 -11.4 Z" fill="#ea4335"/><path d="M-15 -9 L-9 -3.6 V-10.6 L-10.6 -11.8 Q-15 -13.6 -15 -9 Z" fill="#c5221f"/><path d="M15 -9 L9 -3.6 V-10.6 L10.6 -11.8 Q15 -13.6 15 -9 Z" fill="#fbbc04"/></g><circle cx="239" cy="528.3" r="23.6" fill="#fff"/><g transform="translate(239,528.3)"><path d="M0 0 V-16 A8.4 8.4 0 0 1 8.4 -7.6 A8 8 0 0 1 0 0 Z" fill="#ea4335"/><path d="M0 0 H16 A8.4 8.4 0 0 1 7.6 8.4 A8 8 0 0 1 0 0 Z" fill="#4285f4"/><path d="M0 0 V16 A8.4 8.4 0 0 1 -8.4 7.6 A8 8 0 0 1 0 0 Z" fill="#34a853"/><path d="M0 0 H-16 A8.4 8.4 0 0 1 -7.6 -8.4 A8 8 0 0 1 0 0 Z" fill="#fbbc04"/></g><circle cx="321" cy="528.3" r="23.6" fill="#fff"/><g transform="translate(321,528.3)"><rect x="-17.4" y="-12" width="34.8" height="24" rx="7" fill="#ff0033"/><path d="M-4.4 -5.6 L5.8 0 L-4.4 5.6 Z" fill="#fff"/></g><text x="74" y="572.4" font-family="Liberation Sans, sans-serif" font-size="12.6" fill="#fff" text-anchor="middle" textLength="49.5" lengthAdjust="spacingAndGlyphs">Play Store</text><text x="156" y="572.4" font-family="Liberation Sans, sans-serif" font-size="12.6" fill="#fff" text-anchor="middle" textLength="28" lengthAdjust="spacingAndGlyphs">Gmail</text><text x="239" y="572.4" font-family="Liberation Sans, sans-serif" font-size="12.6" fill="#fff" text-anchor="middle" textLength="35" lengthAdjust="spacingAndGlyphs">Photos</text><text x="321" y="572.4" font-family="Liberation Sans, sans-serif" font-size="12.6" fill="#fff" text-anchor="middle" textLength="43" lengthAdjust="spacingAndGlyphs">YouTube</text><circle cx="74" cy="680.4" r="23.6" fill="#1a73e8"/><g transform="translate(74,680.4) scale(1.25)"><path d="M-7.6 -9.4 H-3.4 L-1.6 -4 L-4.2 -1.8 Q-1.6 3.4 3.2 5.4 L5.2 2.8 L9.6 4.4 V8.6 Q9.6 9.6 8.4 9.6 Q-8.6 8.2 -8.8 -8.2 Q-8.8 -9.4 -7.6 -9.4 Z" fill="#fff" transform="rotate(-4)"/></g><circle cx="156" cy="680.4" r="23.6" fill="#fff"/><g transform="translate(156,680.4)"><path d="M-6 -7 H8 A8 8 0 0 1 8 10 H2 L-2 15 V10 H-6 A8 8 0 0 1 -6 -7 Z" fill="#8ab4f8"/><rect x="-14.4" y="-10.6" width="27" height="16.6" rx="8.3" fill="#0b57d0"/></g><g transform="translate(239,680.4)"><circle r="23.6" fill="#fff"/><path d="M0 0 L-20.44 -11.8 A23.6 23.6 0 0 1 20.44 -11.8 Z" fill="#ea4335"/><path d="M0 0 L20.44 -11.8 A23.6 23.6 0 0 1 0 23.6 Z" fill="#fbbc04"/><path d="M0 0 L0 23.6 A23.6 23.6 0 0 1 -20.44 -11.8 Z" fill="#34a853"/><path d="M0 -11 H20.8 L10 0 Z" fill="#ea4335"/><path d="M9.5 5.5 L-0.9 23.5 L-5 8 Z" fill="#fbbc04"/><path d="M-9.5 5.5 L-19.9 -12.5 L-4 -9 Z" fill="#34a853"/><circle r="10.8" fill="#fff"/><circle r="8.6" fill="#1a73e8"/></g><rect x="48" y="732" width="299.6" height="40.2" rx="20.1" fill="#fff"/><path d="M63.55 748.57 A7.3 7.3 0 0 1 75.42 747.12" stroke="#ea4335" stroke-width="3.5" fill="none"/><path d="M63.81 755.87 A7.3 7.3 0 0 1 63.68 748.35" stroke="#fbbc04" stroke-width="3.5" fill="none"/><path d="M75.42 756.88 A7.3 7.3 0 0 1 63.68 755.65" stroke="#34a853" stroke-width="3.5" fill="none"/><path d="M77.28 751.49 A7.3 7.3 0 0 1 75.25 757.07" stroke="#4285f4" stroke-width="3.5" fill="none"/><rect x="70.4" y="750.25" width="8.6" height="3.5" fill="#4285f4"/><g transform="translate(287,751)"><rect x="-2.6" y="-9.6" width="5.2" height="12.6" rx="2.6" fill="#4285f4"/><path d="M-5.6 1.6 A5.6 5.6 0 0 0 5.6 1.6" stroke="#ea4335" stroke-width="1.7" fill="none"/><path d="M0 7.2 V10.6" stroke="#34a853" stroke-width="1.8"/></g><g transform="translate(325.4,752)"><path d="M-9.4 -1 V-4.6 Q-9.4 -7 -7 -7 H-3.4" stroke="#ea4335" stroke-width="2" fill="none"/><path d="M-3.6 -7 L-2 -9.2 H3 L4.6 -7 H7 Q9.4 -7 9.4 -4.6 V-1" stroke="#4285f4" stroke-width="2" fill="none"/><path d="M9.4 -1 V5.6 Q9.4 8 7 8 H2" stroke="#34a853" stroke-width="2" fill="none"/><path d="M2 8 H-7 Q-9.4 8 -9.4 5.6 V-1" stroke="#fbbc04" stroke-width="2" fill="none"/><circle r="3.2" cy=".6" fill="#4285f4"/></g><rect x="155" y="798.6" width="86" height="2.8" rx="1.4" fill="#fff"/></svg>
<div style="left:2478px;top:1068px;width:34px;height:134.5px;background:#fff;border:1px solid #d6d6d6;border-radius:3px;"></div>
<svg style="left:2487px;top:1078px;" width="16" height="16" viewBox="0 0 16 16"><path d="M8 1.5V14.5M1.5 8H14.5" stroke="#6e6e6e" stroke-width="1.6"/></svg>
<svg style="left:2487px;top:1110px;" width="16" height="16" viewBox="0 0 16 16"><path d="M2 8H14" stroke="#b8b8b8" stroke-width="1.6"/></svg>
<span class="s" style="left:2485.28px;top:1144.00px;font-size:14px;line-height:14px;color:#5a5a5a;letter-spacing:-0.400px;font-weight:700;">1:1</span>
<svg style="left:2486px;top:1175px;" width="18" height="18" viewBox="0 0 18 18"><rect x="1.2" y="2.2" width="15.6" height="13.6" fill="none" stroke="#a8a8a8" stroke-width="1.4"/><path d="M4 8 V5 H7 M11 13 H14 V10" fill="none" stroke="#a8a8a8" stroke-width="1.3"/></svg>
<div style="left:1509.5px;top:67.5px;width:405.5px;height:293px;background:#fff;border:1px solid #adadad;box-shadow:0 2px 5px rgba(0,0,0,.12);"></div>
<div style="left:1510.5px;top:73px;width:403.5px;height:25px;background:#2675bf;"></div>
<span class="s" style="left:1553.75px;top:76.95px;font-size:17.3px;line-height:17.3px;color:#fff;letter-spacing:0.039px;">Edit Configurations...</span>
<svg style="left:1527px;top:103px;" width="16" height="16" viewBox="0 0 16 16"><path d="M1 1 H15 V15 H1 Z" fill="#6e6e6e"/><rect x="3.6" y="3" width="8.8" height="4.6" fill="#fff"/><rect x="4.6" y="10.4" width="6.8" height="4.6" fill="#fff"/><rect x="6" y="11.8" width="4" height="2" fill="#6e6e6e"/></svg>
<span class="s" style="left:1553.75px;top:101.95px;font-size:17.3px;line-height:17.3px;color:#000;letter-spacing:-0.071px;">Save 'WebRTCServiceTest' Configuration</span>
<div style="left:1514px;top:131px;width:396px;height:1px;background:#d4d4d4;"></div>
<span class="s" style="left:1525.50px;top:138.70px;font-size:17px;line-height:17px;color:#9c9c9c;letter-spacing:1.116px;-webkit-text-stroke:.45px #9c9c9c;">Run Configurations</span>
<svg style="left:1527px;top:167.5px;" width="16" height="16" viewBox="0 1 16 16"><g opacity="1"><path d="M0.8 13.5 A7.2 7.2 0 0 1 15.2 13.5 Z" fill="#3ddc84"/><path d="M3.6 7.6 L2 4.8 M12.4 7.6 L14 4.8" stroke="#3ddc84" stroke-width="1.1"/><circle cx="4.9" cy="10.6" r=".8" fill="#fff"/><circle cx="11.1" cy="10.6" r=".8" fill="#fff"/></g></svg>
<span class="s" style="left:1553.75px;top:166.95px;font-size:17.3px;line-height:17.3px;color:#000;letter-spacing:-0.547px;">app</span>
<svg style="left:1887px;top:168px;" width="10" height="14" viewBox="0 0 10 14"><path d="M2.4 1.6 L7.6 7 L2.4 12.4" fill="none" stroke="#6e6e6e" stroke-width="1.5"/></svg>
<div style="left:1514px;top:196.5px;width:396px;height:1px;background:#d4d4d4;"></div>
<svg style="left:1527px;top:206px;" width="17" height="17" viewBox="0 -1 17 17"><g opacity="1"><path d="M0.8 13.5 A7.2 7.2 0 0 1 15.2 13.5 Z" fill="#3ddc84"/><path d="M3.6 7.6 L2 4.8 M12.4 7.6 L14 4.8" stroke="#3ddc84" stroke-width="1.1"/><circle cx="4.9" cy="10.6" r=".8" fill="#fff"/><circle cx="11.1" cy="10.6" r=".8" fill="#fff"/></g><path d="M9.4 .2 L17.4 8.2 M17.4 .2 L9.4 8.2" stroke="#fff" stroke-width="3.4" fill="none"/><path d="M9.8 .6 L17 7.8 M17 .6 L9.8 7.8" stroke="#e0424d" stroke-width="1.9" fill="none"/></svg>
<span class="s" style="left:1553.75px;top:207.55px;font-size:17.3px;line-height:17.3px;color:#000;letter-spacing:-0.154px;">KeyValueServiceTest</span>
<svg style="left:1887px;top:209px;" width="10" height="14" viewBox="0 0 10 14"><path d="M2.4 1.6 L7.6 7 L2.4 12.4" fill="none" stroke="#6e6e6e" stroke-width="1.5"/></svg>
<svg style="left:1527px;top:231px;" width="17" height="17" viewBox="0 -1 17 17"><g opacity="1"><path d="M0.8 13.5 A7.2 7.2 0 0 1 15.2 13.5 Z" fill="#a6e6c2"/><path d="M3.6 7.6 L2 4.8 M12.4 7.6 L14 4.8" stroke="#a6e6c2" stroke-width="1.1"/><circle cx="4.9" cy="10.6" r=".8" fill="#fff"/><circle cx="11.1" cy="10.6" r=".8" fill="#fff"/></g><path d="M13.2 .1 V5.7 L9.7 2.9 Z" fill="#f4a98c"/><path d="M13.8 .1 L17.6 2.9 L13.8 5.7 Z" fill="#a4d89a"/></svg>
<span class="s" style="left:1553.75px;top:232.55px;font-size:17.3px;line-height:17.3px;color:#000;letter-spacing:-0.344px;">WebRTCServiceTest</span>
<svg style="left:1887px;top:234px;" width="10" height="14" viewBox="0 0 10 14"><path d="M2.4 1.6 L7.6 7 L2.4 12.4" fill="none" stroke="#6e6e6e" stroke-width="1.5"/></svg>
<svg style="left:1527px;top:256px;" width="17" height="17" viewBox="0 -1 17 17"><g opacity="1"><path d="M0.8 13.5 A7.2 7.2 0 0 1 15.2 13.5 Z" fill="#a6e6c2"/><path d="M3.6 7.6 L2 4.8 M12.4 7.6 L14 4.8" stroke="#a6e6c2" stroke-width="1.1"/><circle cx="4.9" cy="10.6" r=".8" fill="#fff"/><circle cx="11.1" cy="10.6" r=".8" fill="#fff"/></g><path d="M9.4 .2 L17.4 8.2 M17.4 .2 L9.4 8.2" stroke="#fff" stroke-width="3.4" fill="none"/><path d="M9.8 .6 L17 7.8 M17 .6 L9.8 7.8" stroke="#e0424d" stroke-width="1.9" fill="none"/></svg>
<span class="s" style="left:1553.75px;top:257.55px;font-size:17.3px;line-height:17.3px;color:#000;letter-spacing:0.078px;">testNotifyListenersOnSignalingChange()</span>
<svg style="left:1887px;top:259px;" width="10" height="14" viewBox="0 0 10 14"><path d="M2.4 1.6 L7.6 7 L2.4 12.4" fill="none" stroke="#6e6e6e" stroke-width="1.5"/></svg>
<svg style="left:1527px;top:281px;" width="17" height="17" viewBox="0 -1 17 17"><g opacity="1"><path d="M0.8 13.5 A7.2 7.2 0 0 1 15.2 13.5 Z" fill="#a6e6c2"/><path d="M3.6 7.6 L2 4.8 M12.4 7.6 L14 4.8" stroke="#a6e6c2" stroke-width="1.1"/><circle cx="4.9" cy="10.6" r=".8" fill="#fff"/><circle cx="11.1" cy="10.6" r=".8" fill="#fff"/></g><path d="M9.4 .2 L17.4 8.2 M17.4 .2 L9.4 8.2" stroke="#fff" stroke-width="3.4" fill="none"/><path d="M9.8 .6 L17 7.8 M17 .6 L9.8 7.8" stroke="#e0424d" stroke-width="1.9" fill="none"/></svg>
<span class="s" style="left:1553.75px;top:282.55px;font-size:17.3px;line-height:17.3px;color:#000;letter-spacing:0.096px;">testPeerConnectionInitialization()</span>
<svg style="left:1887px;top:284px;" width="10" height="14" viewBox="0 0 10 14"><path d="M2.4 1.6 L7.6 7 L2.4 12.4" fill="none" stroke="#6e6e6e" stroke-width="1.5"/></svg>
<svg style="left:1527px;top:306px;" width="17" height="17" viewBox="0 -1 17 17"><g opacity="1"><path d="M0.8 13.5 A7.2 7.2 0 0 1 15.2 13.5 Z" fill="#a6e6c2"/><path d="M3.6 7.6 L2 4.8 M12.4 7.6 L14 4.8" stroke="#a6e6c2" stroke-width="1.1"/><circle cx="4.9" cy="10.6" r=".8" fill="#fff"/><circle cx="11.1" cy="10.6" r=".8" fill="#fff"/></g><path d="M9.4 .2 L17.4 8.2 M17.4 .2 L9.4 8.2" stroke="#fff" stroke-width="3.4" fill="none"/><path d="M9.8 .6 L17 7.8 M17 .6 L9.8 7.8" stroke="#e0424d" stroke-width="1.9" fill="none"/></svg>
<span class="s" style="left:1553.75px;top:307.55px;font-size:17.3px;line-height:17.3px;color:#000;letter-spacing:0.019px;">testServiceBinding()</span>
<svg style="left:1887px;top:309px;" width="10" height="14" viewBox="0 0 10 14"><path d="M2.4 1.6 L7.6 7 L2.4 12.4" fill="none" stroke="#6e6e6e" stroke-width="1.5"/></svg>
<svg style="left:1527px;top:331px;" width="17" height="17" viewBox="0 -1 17 17"><g opacity="1"><path d="M0.8 13.5 A7.2 7.2 0 0 1 15.2 13.5 Z" fill="#a6e6c2"/><path d="M3.6 7.6 L2 4.8 M12.4 7.6 L14 4.8" stroke="#a6e6c2" stroke-width="1.1"/><circle cx="4.9" cy="10.6" r=".8" fill="#fff"/><circle cx="11.1" cy="10.6" r=".8" fill="#fff"/></g><path d="M9.4 .2 L17.4 8.2 M17.4 .2 L9.4 8.2" stroke="#fff" stroke-width="3.4" fill="none"/><path d="M9.8 .6 L17 7.8 M17 .6 L9.8 7.8" stroke="#e0424d" stroke-width="1.9" fill="none"/></svg>
<span class="s" style="left:1553.75px;top:332.55px;font-size:17.3px;line-height:17.3px;color:#000;letter-spacing:0.090px;">testWebSocketConnection()</span>
<svg style="left:1887px;top:334px;" width="10" height="14" viewBox="0 0 10 14"><path d="M2.4 1.6 L7.6 7 L2.4 12.4" fill="none" stroke="#6e6e6e" stroke-width="1.5"/></svg>
<svg style="left:1664px;top:86px;" width="26" height="32" viewBox="0 0 26 32"><path d="M8.2 2.2 Q10.2 .6 11.6 2.6 V11.6 L13 11.4 Q14.6 10.2 15.8 12 L17.4 12.2 Q18.8 11.4 19.8 13 L21.4 13.4 Q23 13.2 23 15.4 V22 Q22.6 27.4 17.6 29.6 H11 Q7 28.6 5.2 24.6 L1.6 18.2 Q1.2 16 3.4 15.8 Q5 16 6.4 18 L8 19.6 V3 Z" fill="#fff" stroke="#111" stroke-width="1.5" stroke-linejoin="round"/><path d="M12.4 12.6 V17.4 M15.8 13.4 V17.6 M19.2 14.2 V17.8" stroke="#111" stroke-width="1.3"/></svg>
<div style="left:26px;top:1121px;width:494px;height:1px;background:#d1d1d1;"></div>
<div style="left:26px;top:1122px;width:494px;height:69px;background:#f2f2f2;"></div>
<span class="s" style="left:34.00px;top:1130.35px;font-size:17.3px;line-height:17.3px;color:#000;letter-spacing:-0.016px;">Structure</span>
<svg style="left:390px;top:1131.5px;overflow:visible;" width="16" height="16" viewBox="0 0 16 16"><rect x=".2" y="-.7" width="15.6" height="2.3" fill="#6e6e6e"/><rect x=".2" y="14.4" width="15.6" height="2.3" fill="#6e6e6e"/><path d="M8 3.2 L12.1 6.8 H3.9 Z M8 12.8 L12.1 9.2 H3.9 Z" fill="#6e6e6e"/></svg>
<svg style="left:422px;top:1131.5px;overflow:visible;" width="16" height="16" viewBox="0 0 16 16"><rect x=".4" y="6.8" width="15" height="2.2" fill="#6e6e6e"/><path d="M3.9 .2 H11.9 L7.9 4.3 Z M3.9 15.8 H11.9 L7.9 11.4 Z" fill="#6e6e6e"/></svg>
<div style="left:450px;top:1127.5px;width:1px;height:24px;background:#d1d1d1;"></div>
<svg style="left:463px;top:1131.5px;" width="16" height="16" viewBox="0 0 16 16"><rect x="5.9" y="0" width="4.2" height="3.6" rx=".5" fill="#6e6e6e" transform="rotate(0 8 8)"/><rect x="5.9" y="0" width="4.2" height="3.6" rx=".5" fill="#6e6e6e" transform="rotate(60 8 8)"/><rect x="5.9" y="0" width="4.2" height="3.6" rx=".5" fill="#6e6e6e" transform="rotate(120 8 8)"/><rect x="5.9" y="0" width="4.2" height="3.6" rx=".5" fill="#6e6e6e" transform="rotate(180 8 8)"/><rect x="5.9" y="0" width="4.2" height="3.6" rx=".5" fill="#6e6e6e" transform="rotate(240 8 8)"/><rect x="5.9" y="0" width="4.2" height="3.6" rx=".5" fill="#6e6e6e" transform="rotate(300 8 8)"/><circle cx="8" cy="8" r="4.35" fill="none" stroke="#6e6e6e" stroke-width="3"/></svg>
<svg style="left:496px;top:1131.5px;" width="16" height="16" viewBox="0 0 16 16"><rect x=".2" y="6.9" width="15.6" height="2.2" fill="#6e6e6e"/></svg>
<div style="left:26px;top:1154px;width:494px;height:1px;background:#d1d1d1;"></div>
<div style="left:26px;top:1190px;width:494px;height:1px;background:#d1d1d1;"></div>
<div style="left:26px;top:1191px;width:494px;height:38px;background:#fff;"></div>
<svg style="left:36px;top:1163px;" width="20" height="19" viewBox="0 0 20 19"><path d="M5.2 .9 V13" stroke="#6e6e6e" stroke-width="2.1" fill="none"/><path d="M.7 11.4 H9.7 L5.2 17 Z" fill="#6e6e6e"/><rect x="11.3" y="4.4" width="6.9" height="3.9" fill="#59a869"/><path d="M12.7 4.6 V2.9 A1.85 1.85 0 0 1 16.4 2.9" fill="none" stroke="#59a869" stroke-width="1.3"/><rect x="11.3" y="12.3" width="6.9" height="5" fill="#db5860"/><path d="M12.9 12.4 V11.1 A1.85 1.85 0 0 1 16.6 11.1 V12.4" fill="none" stroke="#db5860" stroke-width="1.3"/></svg>
<svg style="left:68px;top:1163px;" width="20" height="19" viewBox="0 0 20 19"><path d="M5.2 .9 V13" stroke="#6e6e6e" stroke-width="2.1" fill="none"/><path d="M.7 11.4 H9.7 L5.2 17 Z" fill="#6e6e6e"/><text x="15.2" y="8.6" text-anchor="middle" font-family="Liberation Sans, sans-serif" font-size="11.6" font-weight="700" fill="#6e6e6e">a</text><text x="15.2" y="17" text-anchor="middle" font-family="Liberation Sans, sans-serif" font-size="11.6" font-weight="700" fill="#6e6e6e">z</text></svg>
<div style="left:98px;top:1161px;width:1px;height:24px;background:#d1d1d1;"></div>
<svg style="left:109px;top:1163px;" width="20" height="20" viewBox="0 0 20 20"><circle cx="10" cy="10" r="9" fill="#9fd48c"/><text x="10" y="14.4" text-anchor="middle" font-family="Liberation Mono, monospace" font-size="13" font-weight="700" fill="#3b4a3a">I</text><path d="M12.6 0 H20 V8.4 H12.6 Z" fill="#f2f2f2"/><path d="M16.8 8 V3.6" stroke="#9aafc4" stroke-width="2"/><path d="M13.4 4.2 L16.8 .2 L20.2 4.2 Z" fill="#9aafc4"/></svg>
<svg style="left:141px;top:1163px;" width="20" height="20" viewBox="0 0 20 20"><circle cx="10" cy="10" r="9" fill="#d6c0f5"/><text x="10" y="13.4" text-anchor="middle" font-family="Liberation Sans, sans-serif" font-size="13" font-weight="400" fill="#4f4a5c">p</text></svg>
<div style="left:170px;top:1158.6px;width:27.8px;height:27.4px;background:#cfcfcf;border-radius:4px;"></div>
<svg style="left:174px;top:1163px;" width="20" height="20" viewBox="0 0 20 20"><circle cx="10" cy="10" r="9" fill="#f0be6e"/><text x="10" y="14.2" text-anchor="middle" font-family="Liberation Sans, sans-serif" font-size="13" font-weight="400" fill="#4f4434">f</text></svg>
<div style="left:202.4px;top:1158.6px;width:27.8px;height:27.4px;background:#cfcfcf;border-radius:4px;"></div>
<svg style="left:210px;top:1166px;" width="12" height="14" viewBox="0 0 12 14"><rect x="2.2" y="7" width="8" height="5.2" fill="#f0855a"/><path d="M3.8 7 V5 A2.4 2.4 0 0 1 8.6 5 V7" fill="none" stroke="#f0855a" stroke-width="1.5"/></svg>
<svg style="left:240px;top:1164px;" width="16" height="16" viewBox="0 0 16 16"><path d="M2.4 2.4 L8 8.6 L13.6 2.4 M8 8.6 V11" fill="none" stroke="#6e6e6e" stroke-width="2"/><path d="M.6 .6 H5.4 L.6 5.4 Z M15.4 .6 H10.6 L15.4 5.4 Z" fill="#6e6e6e"/><rect x="5.2" y="10.4" width="5.8" height="4.8" fill="#6e6e6e"/></svg>
<svg style="left:271.2px;top:1163px;" width="20" height="20" viewBox="0 0 20 20"><circle cx="10" cy="10" r="6.3" fill="none" stroke="#86cfea" stroke-width="5"/></svg>
<svg style="left:303.6px;top:1163px;" width="20" height="20" viewBox="0 0 20 20"><circle cx="10" cy="10" r="9" fill="#f8b8c8"/><text x="10" y="14" text-anchor="middle" font-family="Liberation Sans, sans-serif" font-size="13" font-weight="400" fill="#5a3a44">λ</text></svg>
<div style="left:334.5px;top:1161px;width:1px;height:24px;background:#d1d1d1;"></div>
<div style="left:341px;top:1158.6px;width:27.8px;height:27.4px;background:#cfcfcf;border-radius:4px;"></div>
<svg style="left:346px;top:1164px;" width="18" height="19" viewBox="0 0 18 19"><path d="M1.4 7 V2.4 H6 M12 2.4 H16.6 V7" fill="none" stroke="#6e6e6e" stroke-width="1.6"/><path d="M9 17.6 V8" stroke="#6e6e6e" stroke-width="2.2"/><path d="M3.7 11.6 L9 5.6 L14.3 11.6 Z" fill="#6e6e6e"/></svg>
<svg style="left:379px;top:1164px;" width="18" height="19" viewBox="0 0 18 19"><path d="M1.7 7 V2.4 H6.2 M11.8 2.4 H16.3 V7" fill="none" stroke="#6e6e6e" stroke-width="1.6"/><path d="M9 4.6 V14" stroke="#6e6e6e" stroke-width="2.2"/><path d="M4.3 11.4 L9 17.4 L13.7 11.4 Z" fill="#6e6e6e"/></svg>
<div style="left:26px;top:1191px;width:494px;height:38px;overflow:hidden">
<svg style="left:7px;top:4.75px;" width="16" height="16" viewBox="0 0 16 16"><path d="M3.5 5.8 L8 10.3 L12.5 5.8" fill="none" stroke="#7a7a7a" stroke-width="1.4"/></svg>
<svg style="left:31px;top:3.75px;" width="18" height="18" viewBox="0 0 16 16"><circle cx="8" cy="8" r="7.95" fill="#87cfe4"/><path d="M10.4 5.9 A3.2 3.2 0 1 0 10.4 10.1" fill="none" stroke="#3d5a68" stroke-width="1.45"/><path d="M12.3 -.9 V4.2 L9.5 1.65 Z" fill="#e8663a"/><path d="M13.3 -.9 L16.5 1.65 L13.3 4.2 Z" fill="#62b543"/></svg>
<svg style="left:53px;top:6px;" width="13" height="13" viewBox="0 0 13 13"><rect x="4" y="6" width="8" height="6.4" fill="#62b543"/><path d="M5.4 6 V3.6 A2.2 2.2 0 0 0 1 3.6 V5" fill="none" stroke="#62b543" stroke-width="1.4"/></svg>
<span class="s" style="left:74.50px;top:5.10px;font-size:17.3px;line-height:17.3px;color:#2440a2;letter-spacing:-0.297px;">WebRTCServiceTest</span>
<svg style="left:53px;top:29px;" width="18" height="18" viewBox="0 0 18 18"><circle cx="9" cy="9" r="8.4" fill="#f0bd6a"/><text x="9" y="13" text-anchor="middle" font-family="Liberation Sans, sans-serif" font-size="12" fill="#7a4a10">f</text><path d="M1 1 L6 6" stroke="#9aa7b0" stroke-width="2.4"/></svg>
<svg style="left:77px;top:31px;" width="12" height="14" viewBox="0 0 12 14"><rect x="2.4" y="7" width="7.6" height="6" fill="#f0855a"/><path d="M4 7 V5 A2.2 2.2 0 0 1 8.4 5 V7" fill="none" stroke="#f0855a" stroke-width="1.4"/></svg>
<span class="s" style="left:98.00px;top:30.35px;font-size:17.3px;line-height:17.3px;color:#000;letter-spacing:-0.116px;">TAG: String = "WebRTCServiceTest"</span>
</div>
<div style="left:508px;top:1191px;width:12px;height:33px;background:#000;opacity:.11;"></div>
<div style="left:0px;top:1229px;width:2535px;height:1px;background:#d1d1d1;"></div>
<span class="s" style="left:34.00px;top:1239.35px;font-size:17.3px;line-height:17.3px;color:#000;letter-spacing:0.052px;">Logcat:</span>
<span class="s" style="left:115.00px;top:1239.35px;font-size:17.3px;line-height:17.3px;color:#000;letter-spacing:0.082px;">Logcat</span>
<svg style="left:173px;top:1239.5px;" width="16" height="16" viewBox="0 0 16 16"><path d="M3.5 3.5 L12.5 12.5 M12.5 3.5 L3.5 12.5" stroke="#a0a0a0" stroke-width="1.2" fill="none"/></svg>
<span class="s" style="left:215.50px;top:1239.35px;font-size:17.3px;line-height:17.3px;color:#000;letter-spacing:-0.327px;">com.voipplus.mmsclient (Pixel_8_Pro_API_33)</span>
<svg style="left:568px;top:1239.5px;" width="16" height="16" viewBox="0 0 16 16"><path d="M3.5 3.5 L12.5 12.5 M12.5 3.5 L3.5 12.5" stroke="#a0a0a0" stroke-width="1.2" fill="none"/></svg>
<svg style="left:603.5px;top:1239px;" width="15" height="15" viewBox="0 0 15 15"><path d="M7.5 .8 V14.2 M.8 7.5 H14.2" stroke="#6e6e6e" stroke-width="2.1"/></svg>
<div style="left:200.5px;top:1260px;width:394.5px;height:3.6px;background:#a4adc4;border-radius:1.5px;"></div>
<div style="left:26px;top:1264px;width:2509px;height:1px;background:#d1d1d1;"></div>
<svg style="left:2477px;top:1239px;" width="16" height="16" viewBox="0 0 16 16"><rect x="5.9" y="0" width="4.2" height="3.6" rx=".5" fill="#6e6e6e" transform="rotate(0 8 8)"/><rect x="5.9" y="0" width="4.2" height="3.6" rx=".5" fill="#6e6e6e" transform="rotate(60 8 8)"/><rect x="5.9" y="0" width="4.2" height="3.6" rx=".5" fill="#6e6e6e" transform="rotate(120 8 8)"/><rect x="5.9" y="0" width="4.2" height="3.6" rx=".5" fill="#6e6e6e" transform="rotate(180 8 8)"/><rect x="5.9" y="0" width="4.2" height="3.6" rx=".5" fill="#6e6e6e" transform="rotate(240 8 8)"/><rect x="5.9" y="0" width="4.2" height="3.6" rx=".5" fill="#6e6e6e" transform="rotate(300 8 8)"/><circle cx="8" cy="8" r="4.35" fill="none" stroke="#6e6e6e" stroke-width="3"/></svg>
<svg style="left:2510px;top:1239px;" width="16" height="16" viewBox="0 0 16 16"><rect x=".2" y="6.9" width="15.6" height="2.2" fill="#6e6e6e"/></svg>
<div style="left:38px;top:1275.5px;width:491.5px;height:32.5px;background:#fff;border:1px solid #c4c4c4;border-radius:4px;"></div>
<svg style="left:58px;top:1282px;" width="18" height="20" viewBox="0 0 18 20"><rect x="1.2" y="1.6" width="9" height="13.4" rx="1.3" fill="none" stroke="#8e99a3" stroke-width="1.5"/><rect x="8.4" y="11" width="8.4" height="6.6" fill="#fff" stroke="#a371d6" stroke-width="1.3"/><path d="M8 19 H17" stroke="#a371d6" stroke-width="1.2"/></svg>
<span class="s" style="left:78.00px;top:1283.85px;font-size:17.3px;line-height:17.3px;color:#000;letter-spacing:-0.001px;">Pixel 8 Pro API 33 (emulator-5554)</span>
<span class="s" style="left:351.00px;top:1283.85px;font-size:17.3px;line-height:17.3px;color:#8c8c8c;letter-spacing:-0.037px;">Android 13, API 33</span>
<svg style="left:509px;top:1289px;" width="13" height="8" viewBox="0 0 13 8"><path d="M.8 1 H12.2 L6.5 7.4 Z" fill="#6e6e6e"/></svg>
<div style="left:545px;top:1275.5px;width:1950px;height:32.5px;background:#fff;border:1px solid #c4c4c4;"></div>
<div style="left:546px;top:1276.5px;width:31px;height:30.5px;background:#f2f2f2;"></div>
<svg style="left:553px;top:1283px;" width="20" height="17" viewBox="0 0 20 17"><path d="M1 1.6 H15 L9.8 8 V15 L6.2 13 V8 Z" fill="#6e6e6e"/><path d="M14.6 9 H19.4 L17 11.8 Z" fill="#6e6e6e"/></svg>
<span class="s" style="left:580.50px;top:1281.95px;font-size:17.3px;line-height:17.3px;color:#000;letter-spacing:-0.661px;">Webr</span>
<div style="left:2400px;top:1276.5px;width:94px;height:30.5px;background:#f2f2f2;"></div>
<svg style="left:2411px;top:1285px;" width="12" height="12" viewBox="0 0 12 12"><path d="M1.6 1.6 L10.4 10.4 M10.4 1.6 L1.6 10.4" stroke="#9a9a9a" stroke-width="1.2"/></svg>
<span class="s" style="left:2435.00px;top:1284.00px;font-size:16px;line-height:16px;color:#a6a6a6;letter-spacing:-1.200px;font-weight:700;">Cc</span>
<div style="left:2460px;top:1281px;width:1px;height:22px;background:#d1d1d1;"></div>
<svg style="left:2466px;top:1281px;" width="20" height="20" viewBox="0 0 20 20"><path d="M10 2.4 L12.3 7.6 L17.8 8.1 L13.6 11.8 L14.9 17.2 L10 14.3 L5.1 17.2 L6.4 11.8 L2.2 8.1 L7.7 7.6 Z" fill="none" stroke="#a6a6a6" stroke-width="1.3"/></svg>
<svg style="left:2506px;top:1281px;" width="20" height="20" viewBox="0 0 20 20"><circle cx="10" cy="10" r="8" fill="none" stroke="#a6a6a6" stroke-width="1.4"/><text x="10" y="14.6" text-anchor="middle" font-family="Liberation Sans, sans-serif" font-size="12.5" font-weight="700" fill="#a6a6a6">?</text></svg>
<div style="left:61px;top:1320px;width:2474px;height:7px;background:#fff;"></div>
<div style="left:61px;top:1320px;width:2474px;height:1px;background:#dcdcdc;"></div>
<div style="left:76px;top:1321px;width:284px;height:6px;background:#d9d9d9;"></div>
<div style="left:1036px;top:1321px;width:30px;height:6px;background:#cfe3fb;"></div>
<div style="left:1515px;top:1325px;width:2px;height:2px;background:#7aa7e0;"></div>
<div style="left:1795px;top:1325px;width:2px;height:2px;background:#7aa7e0;"></div>
<div style="left:2395px;top:1325px;width:2px;height:2px;background:#7aa7e0;"></div>
<div style="left:0px;top:1327px;width:2560px;height:1px;background:#d1d1d1;"></div>
<div style="left:247.5px;top:1328.5px;width:91.5px;height:25.5px;background:#bdbdbd;"></div>
<svg style="left:40px;top:1332px;" width="12" height="18" viewBox="0 0 12 18"><path d="M3 2 V16 M3 11 Q9.6 11 9.6 5" fill="none" stroke="#6e6e6e" stroke-width="1.7"/><circle cx="3" cy="3" r="1.9" fill="#6e6e6e"/><circle cx="3" cy="15" r="1.9" fill="#6e6e6e"/><circle cx="9.6" cy="5" r="1.9" fill="#6e6e6e"/></svg>
<span class="s" style="left:59.00px;top:1333.50px;font-size:15px;line-height:15px;color:#000;letter-spacing:-1.086px;">Git</span>
<svg style="left:99px;top:1334px;" width="13" height="14" viewBox="0 0 13 14"><path d="M1.6 1 L12 7 L1.6 13 Z" fill="#6e6e6e"/></svg>
<span class="s" style="left:120.00px;top:1333.50px;font-size:15px;line-height:15px;color:#000;letter-spacing:-1.200px;">Run</span>
<svg style="left:166px;top:1333px;" width="18" height="15" viewBox="0 0 18 15"><path d="M2 13.6 A7 7 0 0 1 5 5" fill="none" stroke="#6e6e6e" stroke-width="2.2"/><path d="M6.6 4 A7 7 0 0 1 16 13.6" fill="none" stroke="#6e6e6e" stroke-width="2.2"/><path d="M8.2 13.6 L12.6 6.4" stroke="#6e6e6e" stroke-width="2.2"/></svg>
<span class="s" style="left:189.00px;top:1333.50px;font-size:15px;line-height:15px;color:#000;letter-spacing:-0.288px;">Profiler</span>
<svg style="left:261px;top:1334px;" width="16" height="14" viewBox="0 0 16 14"><path d="M1 2.4 H15 M1 7 H9.6 M1 11.6 H12" stroke="#6e6e6e" stroke-width="2"/></svg>
<span class="s" style="left:283.00px;top:1333.50px;font-size:15px;line-height:15px;color:#000;letter-spacing:-0.109px;">Logcat</span>
<svg style="left:356px;top:1332.5px;" width="17" height="16" viewBox="0 0 17 16"><path d="M4.4 1.4 H12.6 L16 6 L8.5 15 L1 6 Z M1 6 H16 M4.4 1.4 L6 6 L8.5 15 L11 6 L12.6 1.4 M6 6 L8.5 1.4 L11 6" fill="none" stroke="#6e6e6e" stroke-width="1.1"/></svg>
<span class="s" style="left:378.00px;top:1333.50px;font-size:15px;line-height:15px;color:#000;letter-spacing:-0.298px;">App Quality Insights</span>
<svg style="left:531px;top:1332px;" width="17" height="17" viewBox="0 0 17 17"><path d="M1.4 5.4 L5.6 1.4 L8.2 2 L6 4.2 L15.6 14 L13.6 16 L4 6 L2.8 7.2 Z" fill="#6e6e6e"/></svg>
<span class="s" style="left:554.50px;top:1333.50px;font-size:15px;line-height:15px;color:#000;letter-spacing:-0.715px;">Build</span>
<svg style="left:611.5px;top:1334px;" width="14" height="14" viewBox="0 0 14 14"><path d="M4.4 2 H13.6 M4.4 7 H13.6 M4.4 12 H13.6" stroke="#6e6e6e" stroke-width="2.6"/><path d="M.4 2 H3 M.4 7 H3 M.4 12 H3" stroke="#6e6e6e" stroke-width="2.6"/></svg>
<span class="s" style="left:631.50px;top:1333.50px;font-size:15px;line-height:15px;color:#000;letter-spacing:-1.200px;">TODO</span>
<svg style="left:696px;top:1334px;" width="14" height="14" viewBox="0 0 14 14"><circle cx="7" cy="7" r="6.6" fill="#6e6e6e"/><path d="M7 3 V8" stroke="#f2f2f2" stroke-width="1.9"/><circle cx="7" cy="10.6" r="1.1" fill="#f2f2f2"/></svg>
<span class="s" style="left:716.00px;top:1333.50px;font-size:15px;line-height:15px;color:#000;letter-spacing:-0.408px;">Problems</span>
<svg style="left:804px;top:1334px;" width="15" height="14" viewBox="0 0 15 14"><rect x=".4" y=".4" width="14.2" height="13.2" fill="#6e6e6e"/><path d="M3 4 L6.4 7 L3 10 M7.6 10.4 H12" fill="none" stroke="#f2f2f2" stroke-width="1.4"/></svg>
<span class="s" style="left:825.00px;top:1333.50px;font-size:15px;line-height:15px;color:#000;letter-spacing:-0.098px;">Terminal</span>
<svg style="left:907px;top:1333.5px;" width="16" height="15" viewBox="0 0 16 15"><path d="M4.6 .8 H11.4 L15.4 7.5 L11.4 14.2 H4.6 L.6 7.5 Z" fill="#6e6e6e"/><path d="M6.2 4.4 L11.2 7.5 L6.2 10.6 Z" fill="#f2f2f2"/></svg>
<span class="s" style="left:929.00px;top:1333.50px;font-size:15px;line-height:15px;color:#000;letter-spacing:-0.290px;">Services</span>
<svg style="left:1013px;top:1332.5px;" width="16" height="17" viewBox="0 0 16 17"><path d="M4.6 1 L6.6 3.4 M11.4 1 L9.4 3.4" stroke="#6e6e6e" stroke-width="1.6"/><rect x="3.2" y="3" width="9.6" height="12" rx="4.4" fill="#6e6e6e"/><path d="M3.6 6.6 H.8 M12.4 6.6 H15.2 M3.6 10 H.8 M12.4 10 H15.2" stroke="#6e6e6e" stroke-width="2"/><rect x="3" y="14.6" width="10" height="2.2" fill="#6e6e6e"/></svg>
<span class="s" style="left:1034.00px;top:1333.50px;font-size:15px;line-height:15px;color:#000;letter-spacing:-0.288px;">App Inspection</span>
<div style="left:0px;top:1354px;width:2560px;height:1px;background:#d1d1d1;"></div>
<svg style="left:15px;top:1359px;" width="17" height="17" viewBox="0 0 17 17"><rect x="3.6" y="1" width="12.4" height="12" fill="none" stroke="#8c8c8c" stroke-width="1.3"/><path d="M1 4 V15.6 H13" fill="none" stroke="#8c8c8c" stroke-width="1.3"/></svg>
<span class="s" style="left:49.00px;top:1359.35px;font-size:17.3px;line-height:17.3px;color:#000;letter-spacing:0.114px;">Gradle build finished in 4 m 33 s 153 ms (today 05:44)</span>
<svg style="left:2118px;top:1360px;" width="15" height="15" viewBox="0 0 15 15"><path d="M7.5 .5 Q8.1 6.9 14.5 7.5 Q8.1 8.1 7.5 14.5 Q6.9 8.1 .5 7.5 Q6.9 6.9 7.5 .5 Z" fill="#5a5a5a"/></svg>
<span class="s" style="left:2150.00px;top:1359.35px;font-size:17.3px;line-height:17.3px;color:#000;letter-spacing:-0.188px;">36:42</span>
<span class="s" style="left:2208.50px;top:1359.35px;font-size:17.3px;line-height:17.3px;color:#000;letter-spacing:-1.200px;">CRLF</span>
<span class="s" style="left:2264.50px;top:1359.35px;font-size:17.3px;line-height:17.3px;color:#000;letter-spacing:-0.242px;">UTF-8</span>
<svg style="left:2327px;top:1360px;" width="16" height="15" viewBox="0 0 16 15"><path d="M1 1 H15 V11 H8 L4.4 14.4 V11 H1 Z" fill="#6e6e6e"/><path d="M8 3 V7" stroke="#f2f2f2" stroke-width="1.7"/><circle cx="8" cy="9" r=".9" fill="#f2f2f2"/></svg>
<span class="s" style="left:2359.00px;top:1359.35px;font-size:17.3px;line-height:17.3px;color:#000;letter-spacing:-0.167px;">4 spaces</span>
<svg style="left:2444px;top:1359px;" width="11" height="17" viewBox="0 0 11 17"><path d="M2.6 2 V15 M2.6 10.6 Q8.6 10.6 8.6 5" fill="none" stroke="#6e6e6e" stroke-width="1.6"/><circle cx="2.6" cy="2.8" r="1.8" fill="#6e6e6e"/><circle cx="2.6" cy="14.4" r="1.8" fill="#6e6e6e"/><circle cx="8.6" cy="4.6" r="1.8" fill="#6e6e6e"/></svg>
<span class="s" style="left:2464.50px;top:1359.35px;font-size:17.3px;line-height:17.3px;color:#000;letter-spacing:-0.166px;">master</span>
<svg style="left:2528px;top:1359px;" width="16" height="16" viewBox="0 0 16 16"><rect x="3" y="7.4" width="9.6" height="7.2" fill="#6e6e6e"/><path d="M5 7.4 V4.6 A2.6 2.6 0 0 0 -.2 4.6 V6" fill="none" stroke="#6e6e6e" stroke-width="1.5" transform="translate(2,0)"/></svg>
<div style="left:0px;top:1380.5px;width:2560px;height:59.5px;background:linear-gradient(90deg,#e9e9ec 0%,#e7e8eb 50%,#e9ebef 62%,#f0f2f6 70%,#e4e5e8 76%,#dcdcdd 82%,#dadada 100%);"></div>
<div style="left:0px;top:1380.5px;width:2560px;height:1px;background:#cfcfd2;"></div>
<div style="left:1227.5px;top:1386px;width:48.5px;height:48px;background:#f6f6f8;border:1px solid #e2e2e6;border-radius:5px;"></div>
<div style="left:1242px;top:1430px;width:20px;height:3.2px;background:#0a6ad6;border-radius:2px;"></div>
<div style="left:148px;top:1430.5px;width:8px;height:3px;background:#8a8a8d;border-radius:1.5px;"></div>
<div style="left:312.5px;top:1430.5px;width:8px;height:3px;background:#8a8a8d;border-radius:1.5px;"></div>
<div style="left:367px;top:1430.5px;width:8px;height:3px;background:#8a8a8d;border-radius:1.5px;"></div>
<div style="left:422px;top:1430.5px;width:8px;height:3px;background:#8a8a8d;border-radius:1.5px;"></div>
<div style="left:477.5px;top:1430.5px;width:8px;height:3px;background:#8a8a8d;border-radius:1.5px;"></div>
<div style="left:698px;top:1430.5px;width:8px;height:3px;background:#8a8a8d;border-radius:1.5px;"></div>
<div style="left:918px;top:1430.5px;width:8px;height:3px;background:#8a8a8d;border-radius:1.5px;"></div>
<div style="left:1027px;top:1430.5px;width:8px;height:3px;background:#8a8a8d;border-radius:1.5px;"></div>
<div style="left:1193px;top:1430.5px;width:8px;height:3px;background:#8a8a8d;border-radius:1.5px;"></div>
<div style="left:1303px;top:1430.5px;width:8px;height:3px;background:#8a8a8d;border-radius:1.5px;"></div>
<div style="left:1358px;top:1430.5px;width:8px;height:3px;background:#8a8a8d;border-radius:1.5px;"></div>
<div style="left:1413px;top:1430.5px;width:8px;height:3px;background:#8a8a8d;border-radius:1.5px;"></div>
<div style="left:1468px;top:1430.5px;width:8px;height:3px;background:#8a8a8d;border-radius:1.5px;"></div>
<div style="left:1522px;top:1430.5px;width:8px;height:3px;background:#8a8a8d;border-radius:1.5px;"></div>
<div style="left:1577px;top:1430.5px;width:8px;height:3px;background:#8a8a8d;border-radius:1.5px;"></div>
<div style="left:1633px;top:1430.5px;width:8px;height:3px;background:#8a8a8d;border-radius:1.5px;"></div>
<svg style="left:26px;top:1396px;" width="30" height="30" viewBox="0 0 30 30"><defs><linearGradient id="wg" x1="0" y1="0" x2="1" y2="1"><stop offset="0" stop-color="#4cc6fa"/><stop offset="1" stop-color="#0a6fd0"/></linearGradient></defs><rect x="0" y="0" width="13.8" height="13.8" rx="1" fill="url(#wg)"/><rect x="15.2" y="0" width="13.8" height="13.8" rx="1" fill="url(#wg)"/><rect x="0" y="15.2" width="13.8" height="13.8" rx="1" fill="url(#wg)"/><rect x="15.2" y="15.2" width="13.8" height="13.8" rx="1" fill="url(#wg)"/></svg>
<svg style="left:81px;top:1395.5px;" width="30" height="30" viewBox="0 0 30 30"><rect x="0.6" y="9" width="21" height="20" rx="2" fill="#1e1e1e"/><rect x="8" y="0.6" width="21.4" height="19.4" rx="2" fill="#f4f4f4" stroke="#d0d0d0" stroke-width=".6"/><rect x="8" y="9" width="13.6" height="11" fill="#bdbdbd"/></svg>
<svg style="left:137px;top:1396px;" width="30" height="30" viewBox="0 0 30 30"><path d="M0 4 Q0 2 2 2 H10 L13 5 H28 Q30 5 30 7 V24 Q30 26 28 26 H2 Q0 26 0 24 Z" fill="#e8a10c"/><rect x="0" y="6.5" width="30" height="20" rx="2" fill="#fcd154"/><rect x="6" y="18" width="18" height="9" rx="1.6" fill="#1d7fd8"/><rect x="10" y="21" width="10" height="1.8" fill="#0b4f9c"/></svg>
<svg style="left:192px;top:1395.5px;" width="30" height="30" viewBox="0 0 30 30"><circle cx="14.5" cy="14.5" r="14" fill="#8c8c8c"/><circle cx="14.5" cy="14.5" r="12" fill="#f0f0f0"/><circle cx="14.5" cy="14.5" r="10" fill="#dcdcd8"/><path d="M9 6 L20 22" stroke="#d01818" stroke-width="2.2"/><path d="M18 9 L22 14 L20 18" stroke="#e07020" stroke-width="1.4" fill="none"/></svg>
<svg style="left:247px;top:1396px;" width="30" height="30" viewBox="0 0 30 30"><rect x="0" y="0" width="26" height="24" rx="2" fill="#1d8ae6"/><circle cx="13" cy="11" r="8.4" fill="#7fd0fa"/><circle cx="13" cy="11" r="8.4" fill="none" stroke="#0b62c4" stroke-width="1"/><path d="M19 18 L26 25" stroke="#1a6fd0" stroke-width="4"/></svg>
<svg style="left:302px;top:1394.5px;" width="30" height="32" viewBox="0 0 30 32"><defs><radialGradient id="ff" cx=".6" cy=".25" r=".9"><stop offset="0" stop-color="#ffdf3a"/><stop offset=".45" stop-color="#ff8a16"/><stop offset="1" stop-color="#e31587"/></radialGradient></defs><circle cx="14.6" cy="16" r="14" fill="url(#ff)"/><path d="M16 1 Q26 6 24 16 Q20 8 14 7 Z" fill="#ffbd2e"/><circle cx="15.4" cy="15" r="6.4" fill="#7a3fe0"/><path d="M9 15 Q12 10 20 12 Q14 13 13 19 Z" fill="#ff7a1a"/></svg>
<svg style="left:356px;top:1395.5px;" width="30" height="30" viewBox="0 0 30 30"><path d="M21 0 L30 4 V26 L21 30 L7 17 L2.6 21 L0 19.4 V10.6 L2.6 9 L7 13 Z" fill="#8a5bd6"/><path d="M21 0 L30 4 V26 L21 30 Z" fill="#c9a2f2"/><path d="M21 9 L13 15 L21 21 Z" fill="#e9e9ec"/><path d="M0 10.6 L2.6 9 L21 24 V30 Z" fill="#6a3fb6" opacity=".7"/></svg>
<svg style="left:412px;top:1395.5px;" width="30" height="30" viewBox="0 0 30 30"><ellipse cx="14.5" cy="18" rx="14" ry="8" fill="#f0a010"/><ellipse cx="14.5" cy="18" rx="11" ry="5.6" fill="#fff"/><circle cx="14.5" cy="18" r="5" fill="#c81a1a"/><circle cx="14.5" cy="18" r="2" fill="#fff"/><circle cx="4" cy="7" r="2.4" fill="#f0a010"/><circle cx="10.6" cy="3.6" r="2.4" fill="#f0a010"/><circle cx="18.4" cy="3.6" r="2.4" fill="#f0a010"/><circle cx="25" cy="7" r="2.4" fill="#f0a010"/></svg>
<svg style="left:467px;top:1395.5px;" width="30" height="30" viewBox="0 0 30 30"><path d="M22 0 L30 4 V26 L22 30 L7.6 17.6 L3 21.4 L0 19.6 L5.4 15 L0 10.4 L3 8.6 L7.6 12.4 Z" fill="#1b84d6"/><path d="M22 0 L30 4 V26 L22 30 Z" fill="#29a9f0"/><path d="M22 8.6 L13.6 15 L22 21.4 Z" fill="#e9e9ec"/></svg>
<svg style="left:521px;top:1395.5px;" width="30" height="30" viewBox="0 0 30 30"><rect x="0" y="0" width="30" height="30" rx="2" fill="#b40000" stroke="#8c0000" stroke-dasharray="2 1.2"/><text x="15" y="24" text-anchor="middle" font-family="Liberation Sans, sans-serif" font-size="25" font-weight="700" font-style="italic" fill="#fff">Fz</text></svg>
<svg style="left:576px;top:1395.5px;" width="30" height="30" viewBox="0 0 30 30"><rect x="12" y="-1" width="6" height="8" fill="#b40000" transform="rotate(0 15 15)"/><rect x="12" y="-1" width="6" height="8" fill="#b40000" transform="rotate(45 15 15)"/><rect x="12" y="-1" width="6" height="8" fill="#b40000" transform="rotate(90 15 15)"/><rect x="12" y="-1" width="6" height="8" fill="#b40000" transform="rotate(135 15 15)"/><rect x="12" y="-1" width="6" height="8" fill="#b40000" transform="rotate(180 15 15)"/><rect x="12" y="-1" width="6" height="8" fill="#b40000" transform="rotate(225 15 15)"/><rect x="12" y="-1" width="6" height="8" fill="#b40000" transform="rotate(270 15 15)"/><rect x="12" y="-1" width="6" height="8" fill="#b40000" transform="rotate(315 15 15)"/><circle cx="15" cy="15" r="11.6" fill="#b40000"/><text x="15" y="21.6" text-anchor="middle" font-family="Liberation Sans, sans-serif" font-size="18" font-weight="700" font-style="italic" fill="#fff">Fz</text></svg>
<svg style="left:632px;top:1395.5px;" width="30" height="30" viewBox="0 0 30 30"><path d="M14.5 0 L29 4 V14 Q29 25 14.5 30 Q0 25 0 14 V4 Z" fill="#1a8fe8"/><path d="M14.5 0 L29 4 V14 H14.5 Z" fill="#0a6ad0"/><path d="M14.5 14 H0 Q0 25 14.5 30 Z" fill="#0a6ad0"/><path d="M14.5 0 L0 4 V14 H14.5 Z" fill="#49c1f6"/></svg>
<svg style="left:687px;top:1395.5px;" width="30" height="30" viewBox="0 0 30 30"><rect x="0" y="0" width="30" height="30" rx="3.4" fill="#235880"/><path d="M5 6 Q14 4 18 14 Q20 20 25 23 Q18 23 15 18 Q12 12 8 14 Q9 9 5 6 Z" fill="none" stroke="#e6eef5" stroke-width="1.5"/><path d="M21 3 L26 8" stroke="#e6eef5" stroke-width="2.6"/></svg>
<svg style="left:742px;top:1395.5px;" width="29" height="30" viewBox="0 0 29 30"><path d="M4 3 Q0 10 4 20 Q6 24 8 20 L9 12 Q14 8 19 12 L20 22 Q22 28 25 22 Q30 10 25 3 Q20 -1 14.5 1.6 Q9 -1 4 3 Z" fill="#3b6fa8"/><path d="M12 12 V26 Q12 29 15 29 Q17 29 17 26 V14" fill="#3b6fa8" stroke="#e6eef5" stroke-width="1"/><circle cx="10" cy="9" r="1.1" fill="#fff"/></svg>
<svg style="left:797px;top:1395.5px;" width="30" height="30" viewBox="0 0 30 30"><path d="M3 14 Q2 6 12 8 L20 6 L24 1 L24 10 Q27 16 22 20 L29 25 L20 23 Q10 26 5 20 Z" fill="#6a625a"/><circle cx="11" cy="13" r="3.2" fill="#fff"/><circle cx="17.6" cy="12" r="2.8" fill="#fff"/><circle cx="11.4" cy="13.4" r="1.4" fill="#111"/><circle cx="17.4" cy="12.4" r="1.2" fill="#111"/><ellipse cx="5" cy="15.4" rx="3.2" ry="2.6" fill="#111"/></svg>
<svg style="left:852px;top:1395.5px;" width="30" height="30" viewBox="0 0 30 30"><path d="M1 5 V1 H6 M23 1 H29 V6 M1 24 V29 H6" fill="none" stroke="#3aa832" stroke-width="1.8"/><ellipse cx="10.4" cy="6" rx="7.6" ry="3.4" fill="#f6c04a"/><path d="M2.8 6 V20 Q2.8 23.4 10.4 23.4 Q18 23.4 18 20 V6 Q18 9.4 10.4 9.4 Q2.8 9.4 2.8 6 Z" fill="#fadc5a"/><path d="M14 14 L27 27 M27 14 L14 27" stroke="#ee7a18" stroke-width="3.2"/></svg>
<svg style="left:908px;top:1395.5px;" width="30" height="30" viewBox="0 0 30 30"><rect x="0.6" y="0.6" width="23" height="28.6" fill="#f4f4f0" stroke="#555" stroke-width="1"/><rect x="1.6" y="14" width="21" height="14" fill="#5cc22a"/><rect x="1.6" y="6" width="21" height="9" fill="#e6e6e0"/><text x="11" y="17" text-anchor="middle" font-family="Liberation Sans, sans-serif" font-size="9" font-weight="700" fill="#222">N++</text><path d="M27 1 L29 3 L18 23 L15.6 24 L16 21.4 Z" fill="#e8a020" stroke="#7a4a10" stroke-width=".5"/></svg>
<svg style="left:964px;top:1395.5px;" width="26" height="30" viewBox="0 0 26 30"><path d="M2 0 H17 L25 8 V28 Q25 30 23 30 H2 Q0 30 0 28 V2 Q0 0 2 0 Z" fill="#2aa838"/><path d="M17 0 L25 8 H17 Z" fill="#8ae86a"/><rect x="5" y="13" width="15" height="10" fill="none" stroke="#d6f5d0" stroke-width="1.3"/><path d="M5 16.4 H20 M5 19.8 H20 M10 13 V23 M15 13 V23" stroke="#d6f5d0" stroke-width="1"/></svg>
<svg style="left:1019px;top:1395.5px;" width="26" height="30" viewBox="0 0 26 30"><path d="M2 0 H17 L25 8 V28 Q25 30 23 30 H2 Q0 30 0 28 V2 Q0 0 2 0 Z" fill="#1a6fd0"/><path d="M17 0 L25 8 H17 Z" fill="#5ac0f8"/><path d="M5 13 H12 M5 16.4 H12 M5 19.8 H20 M5 23.2 H17" stroke="#d6e8fa" stroke-width="1.5"/><rect x="14" y="12" width="6" height="5" fill="none" stroke="#d6e8fa" stroke-width="1.1"/></svg>
<svg style="left:1071px;top:1395.5px;" width="30" height="30" viewBox="0 0 30 30"><rect x="0" y="0" width="30" height="30" rx="4.6" fill="#0c0c0e"/><text x="9" y="22" text-anchor="middle" font-family="Liberation Sans, sans-serif" font-size="13" font-weight="700" fill="#1a56d6">m</text><text x="20.6" y="22.6" text-anchor="middle" font-family="Liberation Sans, sans-serif" font-size="21" font-weight="700" fill="#e8e8e8">R</text></svg>
<svg style="left:1126px;top:1395.5px;" width="30" height="30" viewBox="0 0 30 30"><circle cx="11" cy="11" r="10.6" fill="#3a9a4a"/><path d="M11 .4 A10.6 10.6 0 0 1 11 21.6 Q4 16 11 .4 Z" fill="#3a86d6"/><path d="M2 6 L9 9 L7 4 Z" fill="#f0b020"/><path d="M14 7 L26 10 V30 L14 26 Z" fill="#b9bdc4"/><path d="M26 10 L29 8 V27 L26 30 Z" fill="#8a8f98"/><path d="M16 20 L24 22.4 M16 23 L24 25.4" stroke="#4a8a3a" stroke-width="1.2"/></svg>
<svg style="left:1182px;top:1395.5px;" width="30" height="30" viewBox="0 0 30 30"><rect x="0" y="5" width="30" height="22" rx="2" fill="#2c2c2e"/><rect x="0" y="5" width="30" height="4.4" rx="2" fill="#4a4a4e"/><path d="M5 13 L10.6 17.4 L5 21.8" fill="none" stroke="#fff" stroke-width="2"/><path d="M13 22.4 H22" stroke="#fff" stroke-width="2"/></svg>
<svg style="left:1237.5px;top:1395.5px;" width="30" height="30" viewBox="0 0 30 30"><circle cx="14.3" cy="14.3" r="14.3" fill="#fff"/><path d="M14.3 5.6 L20.6 22.4 M14.3 5.6 L8 22.4 M10 17.6 H18.6" stroke="#3a7be0" stroke-width="2.5" fill="none" stroke-linecap="round"/><path d="M6.4 13.6 Q14.3 8.4 22.2 13.6" stroke="#3a7be0" stroke-width="1.8" fill="none"/><circle cx="14.3" cy="5.2" r="1.8" fill="#073042"/><path d="M19 11.4 L23 13.6 L19.4 16 Z" fill="#3ddc84"/></svg>
<svg style="left:1292px;top:1395.5px;" width="30" height="30" viewBox="0 0 30 30"><circle cx="15" cy="15" r="15" fill="#fff"/><path d="M15 15 L2.01 7.5 A15 15 0 0 1 27.99 7.5 Z" fill="#ea4335"/><path d="M15 15 L27.99 7.5 A15 15 0 0 1 15 30 Z" fill="#fbbc04"/><path d="M15 15 L15 30 A15 15 0 0 1 2.01 7.5 Z" fill="#34a853"/><path d="M15 8 H28.2 L21.4 15 Z" fill="#ea4335"/><path d="M21 18.5 L14.4 29.9 L11.8 20 Z" fill="#fbbc04"/><path d="M9 18.5 L2.4 7.1 L12.4 9.2 Z" fill="#34a853"/><circle cx="15" cy="15" r="6.9" fill="#fff"/><circle cx="15" cy="15" r="5.5" fill="#1a73e8"/></svg>
<svg style="left:1347px;top:1395.5px;" width="30" height="30" viewBox="0 0 30 30"><path d="M0 3 L22 0 L30 12 L26 28 L4 30 Z" fill="#12b0f0"/><path d="M3 20 L30 12 L26 28 L4 30 Z" fill="#f6e72a"/><rect x="3.4" y="4.4" width="21.6" height="21.6" fill="#000"/><text x="14.2" y="16.4" text-anchor="middle" font-family="Liberation Sans, sans-serif" font-size="10.6" font-weight="700" fill="#fff">WS</text><rect x="6" y="21" width="7.6" height="1.7" fill="#fff"/></svg>
<svg style="left:1402px;top:1395.5px;" width="30" height="30" viewBox="0 0 30 30"><path d="M0 0 H10 L7 3 L12 8 L8 12 L3 7 L0 10 Z" fill="#3a9ee8" stroke="#1a5fa8" stroke-width=".6"/><path d="M30 30 H20 L23 27 L18 22 L22 18 L27 23 L30 20 Z" fill="#5ac82a" stroke="#2a7a10" stroke-width=".6"/><path d="M10 13 V9.6 A5.2 5.2 0 0 1 20.4 9.6 V13" fill="none" stroke="#9a9a9a" stroke-width="2.4"/><rect x="6.6" y="12.4" width="17" height="12.6" rx="1.4" fill="#c4c4c4" stroke="#7a7a7a" stroke-width=".8"/></svg>
<svg style="left:1458px;top:1395.5px;" width="28" height="30" viewBox="0 0 28 30"><ellipse cx="14" cy="21" rx="12.6" ry="8.6" fill="#f2b60c"/><circle cx="14" cy="8.6" r="7.4" fill="#f8c81a"/><path d="M18 9 L26 10.6 L18.6 13 Z" fill="#ee6a1a"/><circle cx="16" cy="6.6" r="1.2" fill="#222"/><path d="M4 22 Q10 28 20 24" stroke="#d89a08" stroke-width="1.6" fill="none"/></svg>
<svg style="left:1514px;top:1395.5px;" width="24" height="30" viewBox="0 0 24 30"><path d="M12 0 V11 M6 5.4 H18" stroke="#1ec81e" stroke-width="3.4"/><rect x="3" y="11.6" width="18" height="3.4" fill="#dc2a2a"/><path d="M19 19 A7.6 7.6 0 1 0 19 26 V22.4 H12" fill="none" stroke="#2a2a2a" stroke-width="3.6"/></svg>
<svg style="left:1570px;top:1396.5px;" width="23" height="30" viewBox="0 0 23 30"><path d="M.6 .6 H15 L22 7.6 V28.4 H.6 Z" fill="#fdfdfd" stroke="#b4b4b4" stroke-width="1"/><path d="M15 .6 V7.6 H22" fill="none" stroke="#b4b4b4" stroke-width="1"/></svg>
<svg style="left:1622px;top:1395px;" width="31" height="30" viewBox="0 0 31 30"><rect width="31" height="30" fill="#ffffc0"/><text x="15.5" y="13.6" text-anchor="middle" font-family="Liberation Sans, sans-serif" font-size="15" font-weight="700" fill="#0a0a78" textLength="28" lengthAdjust="spacingAndGlyphs">VB-</text><text x="15.5" y="27.6" text-anchor="middle" font-family="Liberation Sans, sans-serif" font-size="15" font-weight="700" fill="#0a0a78" textLength="28" lengthAdjust="spacingAndGlyphs">NET</text></svg>
<svg style="left:2150px;top:1404px;" width="16" height="11" viewBox="0 0 16 11"><path d="M1.4 9.4 L8 2.6 L14.6 9.4" fill="none" stroke="#1a1a1a" stroke-width="2"/></svg>
<svg style="left:2188px;top:1400px;" width="20" height="20" viewBox="0 0 20 20"><rect width="20" height="20" fill="#d8002e"/><path d="M3.4 4 H11.6 V12.2 L9 9.6 V6.6 H6 Z M3.4 12 L6.6 8.8 V12 Z" fill="#fff"/><path d="M16 8 V14" stroke="#fff" stroke-width="1.6"/><circle cx="16" cy="16.4" r="1" fill="#fff"/></svg>
<svg style="left:2228px;top:1400px;" width="20" height="20" viewBox="0 0 20 20"><rect width="20" height="20" fill="#ef443b"/><path d="M7.6 6.4 L11.2 10 L7.6 13.6 L4 10 Z" fill="#fff"/><path d="M11 6 L15 10 L11 14" fill="none" stroke="#fff" stroke-width="1.6"/></svg>
<svg style="left:2271px;top:1399px;" width="17" height="22" viewBox="0 0 17 22"><rect x="3" y="1" width="8" height="5" fill="none" stroke="#111" stroke-width="1.3"/><rect x="1.4" y="6" width="11.2" height="14" rx="1.4" fill="none" stroke="#111" stroke-width="1.4"/><rect x="5" y="2.6" width="1.4" height="1.4" fill="#111"/><rect x="7.6" y="2.6" width="1.4" height="1.4" fill="#111"/><path d="M9 16 L11.6 19 L16 13.6" fill="none" stroke="#111" stroke-width="1.2"/></svg>
<svg style="left:2310px;top:1400px;" width="16" height="20" viewBox="0 0 16 20"><path d="M1 8 Q1 1 8 1 Q15 1 15 8 V12 Q15 19 8 19 Q1 19 1 12 Z" fill="#f4f4f4" stroke="#c0c0c0" stroke-width=".8"/><path d="M8 1 V8 M1 8 H15" stroke="#c8c8c8" stroke-width=".8"/><path d="M5.6 10.6 L10.4 15.4 M10.4 10.6 L5.6 15.4" stroke="#777" stroke-width="1"/></svg>
<div style="left:2348px;top:1400px;width:20px;height:20px;background:#f0f0f0;border:1px solid #8c8c8c;"></div>
<svg style="left:2387px;top:1398px;" width="22" height="24" viewBox="0 0 22 24"><rect x="1" y="3" width="15" height="13" fill="none" stroke="#222" stroke-width="1.5"/><path d="M8.6 16 V20 M4 20.6 H13" stroke="#222" stroke-width="1.5"/><rect x="15.4" y="1" width="4.6" height="7" rx="1" fill="#dadada" stroke="#222" stroke-width="1.2"/><path d="M17.7 8 V21 H12" fill="none" stroke="#222" stroke-width="1.2"/></svg>
<svg style="left:2417px;top:1399px;" width="22" height="22" viewBox="0 0 22 22"><path d="M1.4 8 H5 L10 3.4 V18.6 L5 14 H1.4 Z" fill="none" stroke="#222" stroke-width="1.4"/><path d="M12.6 7.6 A4.6 4.6 0 0 1 12.6 14.4 M14.8 5 A8.2 8.2 0 0 1 14.8 17 M17 2.6 A11.6 11.6 0 0 1 17 19.4" fill="none" stroke="#222" stroke-width="1.4"/></svg>
<span class="s" style="left:2495.72px;top:1391.90px;font-size:15.6px;line-height:15.6px;color:#111;letter-spacing:0.150px;">14:18</span>
<span class="s" style="left:2455.95px;top:1411.80px;font-size:15.6px;line-height:15.6px;color:#111;letter-spacing:0.150px;">27/02/2025</span>
</body></html>
